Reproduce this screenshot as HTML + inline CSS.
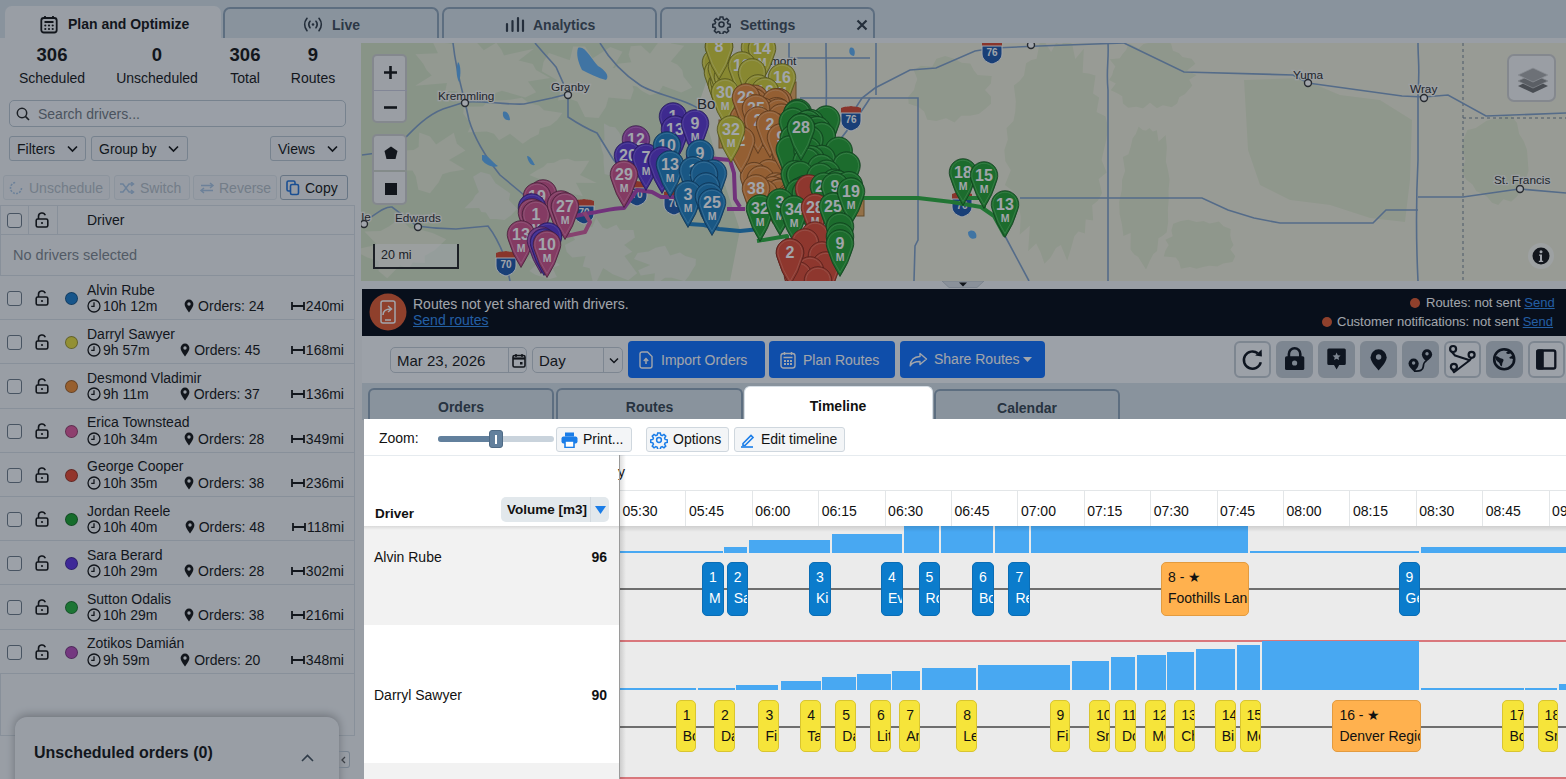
<!DOCTYPE html>
<html><head><meta charset="utf-8">
<style>
*{box-sizing:border-box;margin:0;padding:0}
html,body{width:1566px;height:779px;overflow:hidden;font-family:"Liberation Sans",sans-serif;color:#111;background:#e6ebef}
.abs{position:absolute}
svg{display:block}
#topbar{position:absolute;left:0;top:0;width:1566px;height:38px;background:#d8e2e8}
.ttab{position:absolute;top:7px;height:31px;border:2px solid #8ea3b8;border-bottom:none;border-radius:7px 7px 0 0;background:#d8e2e8;font-size:14px;font-weight:bold;color:#3d4a57}
.ttab.active{background:#f2f4f6;border-color:#f2f4f6;color:#111;top:6px;height:32px}
.ttab span{position:absolute;top:8px;white-space:nowrap}
.ttab svg{position:absolute}
#left{position:absolute;left:0;top:38px;width:1566px;height:741px;background:#f2f4f6}
.stat{position:absolute;top:45px;text-align:center;width:100px}
.stat b{display:block;font-size:18.5px;line-height:20px}
.stat span{display:block;font-size:14px;line-height:16px;margin-top:5px;color:#111}
.inp{position:absolute;border:1px solid #b9c5cf;border-radius:5px;background:#f4f6f8}
.btn{position:absolute;border:1px solid #b9c5cf;border-radius:3px;background:#eef1f4;font-size:14px;color:#111;white-space:nowrap}
.btn span{position:absolute;top:4px}
.btn.dis{color:#b3bcc5;border-color:#dde3e8;background:#eef1f4}
#tbl{position:absolute;left:0;top:205px;width:355px;height:531px;border:1px solid #d6dde3;border-top:1px solid #d6dde3}
.drow{position:absolute;left:0;width:354px;height:44.2px;border-top:1px solid #d6dde3;background:#f2f4f6}
.cb{position:absolute;left:7px;top:15px;width:15px;height:15px;border:1.5px solid #6b7985;border-radius:3px;background:#f7f8fa}
.lk{position:absolute;left:35px;top:14px;width:14px;height:16px}
.dot{position:absolute;left:65px;top:16px;width:13px;height:13px;border-radius:50%;border:1px solid rgba(0,0,0,.35)}
.dn{position:absolute;left:87px;top:5.5px;font-size:14px;line-height:16px;white-space:nowrap}
.dl{position:absolute;left:87px;top:22px;width:257px;font-size:14px;line-height:16px;display:flex;justify-content:space-between;white-space:nowrap}
.dl span{display:flex;align-items:center}
.ic{width:14px;height:14px;margin-right:2px}
.ic2{width:10px;height:14px;margin-right:4px}
.ic3{width:14px;height:10px;margin-right:1px}
#unsch{position:absolute;left:15px;top:717px;width:324px;height:80px;background:#f2f4f6;border-radius:12px 12px 0 0;box-shadow:0 -2px 10px rgba(0,0,0,.3)}
#overlay{position:absolute;left:0;top:0;width:1566px;height:779px;background:rgba(20,30,45,0.4);z-index:100}
.mc{background:#f4f4f4;border:2px solid rgba(0,0,0,.15);border-radius:5px}
.inp2{border:1px solid #c3ccd4;border-radius:5px;background:#f7f8fa;color:#111}
.pbtn{background:#0d6efd;border-radius:4px;color:#fff;font-size:14px;white-space:nowrap}
.ibtn{border:2px solid #c3cbd3;border-radius:6px;background:#f7f8fa}
.ibtn.act{background:#c4ccd4}
.stab{height:32px;border:2px solid #8ea3b8;border-bottom:none;border-radius:6px 6px 0 0;background:#d8e2e8;font-size:14px;font-weight:bold;color:#34414e;text-align:center;padding-top:9px}
#tlw{position:absolute;left:0;top:0;width:1566px;height:779px;z-index:200;overflow:hidden}
.tbtn{border:1px solid #cfd7de;border-radius:3px;background:#f3f5f7;font-size:14px;color:#111;white-space:nowrap}
.st{border-radius:5px;overflow:hidden;white-space:nowrap;font-size:14px}
.st .n{position:absolute;left:6px;top:6px}
.st .l{position:absolute;left:6px;top:27px}
.sb{background:#0b7ccc;color:#fff;border:1px solid #0a6db5}
.sy{background:#f6e43a;color:#111;border:1px solid #d9c530}
.so{background:#ffb14e;color:#111;border:1px solid #e39b3f}
.pn{fill:#fff;font-weight:bold;text-anchor:middle}
.pm{fill:#fff;font-weight:bold;text-anchor:middle}
</style></head><body>
<svg width="0" height="0" style="position:absolute">
 <defs>
  <g id="lock"><path d="M3.5 7V4.5a3.5 3.5 0 0 1 6.8-1.2" fill="none" stroke="#111" stroke-width="1.6"/><rect x="1.2" y="7" width="11.6" height="8" rx="1.6" fill="none" stroke="#111" stroke-width="1.6"/><circle cx="7" cy="11" r="1.1" fill="#111"/></g>
  <g id="clock"><circle cx="7" cy="7" r="6" fill="none" stroke="#111" stroke-width="1.3"/><path d="M7 3.3V7.4H4.2" fill="none" stroke="#111" stroke-width="1.3"/></g>
  <g id="pin"><path d="M5 13.5C2 9.5 .6 7.3.6 5a4.4 4.4 0 0 1 8.8 0c0 2.3-1.4 4.5-4.4 8.5z" fill="#111"/><circle cx="5" cy="5" r="1.7" fill="#f2f4f6"/></g>
  <g id="dist"><path d="M1 1v8M13 1v8M1 5h12" fill="none" stroke="#111" stroke-width="1.8"/></g>
 </defs>
</svg>
<div id="topbar">
  <div class="ttab active" style="left:5px;width:216px">
    <svg style="left:33px;top:7px" width="18" height="19" viewBox="0 0 18 19"><rect x="1.3" y="3" width="15.4" height="14.5" rx="2.5" fill="none" stroke="#111" stroke-width="1.8"/><path d="M5 1v3M13 1v3M4.5 7h9" stroke="#111" stroke-width="1.8"/><g fill="#111"><circle cx="5.3" cy="10.5" r="1.1"/><circle cx="9" cy="10.5" r="1.1"/><circle cx="12.7" cy="10.5" r="1.1"/><circle cx="5.3" cy="14" r="1.1"/><circle cx="9" cy="14" r="1.1"/><circle cx="12.7" cy="14" r="1.1"/></g></svg>
    <span style="left:61px">Plan and Optimize</span>
  </div>
  <div class="ttab" style="left:223px;width:216px">
    <svg style="left:78px;top:8px" width="20" height="15" viewBox="0 0 20 15"><g fill="none" stroke="#2f3a45" stroke-width="1.7" stroke-linecap="round"><path d="M4 1.3C1 5 1 10 4 13.7"/><path d="M16 1.3C19 5 19 10 16 13.7"/><path d="M7 4.3C5.6 6.2 5.6 8.8 7 10.7"/><path d="M13 4.3C14.4 6.2 14.4 8.8 13 10.7"/></g><circle cx="10" cy="7.5" r="1.3" fill="#2f3a45"/></svg>
    <span style="left:107px">Live</span>
  </div>
  <div class="ttab" style="left:442px;width:215px">
    <svg style="left:61px;top:7px" width="20" height="17" viewBox="0 0 20 17"><g stroke="#2f3a45" stroke-width="2.2" stroke-linecap="round"><path d="M2 8v7M7.5 5v10M13 2v13M18 4.5v10.5"/></g></svg>
    <span style="left:89px">Analytics</span>
  </div>
  <div class="ttab" style="left:660px;width:215px">
    <svg style="left:50px;top:6px" width="19" height="19" viewBox="0 0 24 24"><path fill="none" stroke="#2f3a45" stroke-width="2" d="M10.3 2.5h3.4l.6 2.8 1.9.8 2.4-1.6 2.4 2.4-1.6 2.4.8 1.9 2.8.6v3.4l-2.8.6-.8 1.9 1.6 2.4-2.4 2.4-2.4-1.6-1.9.8-.6 2.8h-3.4l-.6-2.8-1.9-.8-2.4 1.6-2.4-2.4 1.6-2.4-.8-1.9-2.8-.6v-3.4l2.8-.6.8-1.9-1.6-2.4 2.4-2.4 2.4 1.6 1.9-.8z"/><circle cx="12" cy="12" r="3.2" fill="none" stroke="#2f3a45" stroke-width="2"/></svg>
    <span style="left:78px">Settings</span>
    <svg style="left:194px;top:10px" width="12" height="12" viewBox="0 0 12 12"><path d="M1.5 1.5l9 9M10.5 1.5l-9 9" stroke="#2f3a45" stroke-width="2.2"/></svg>
  </div>
</div>
<div id="left">
</div>

<div class="stat" style="left:2px"><b>306</b><span>Scheduled</span></div>
<div class="stat" style="left:107px"><b>0</b><span>Unscheduled</span></div>
<div class="stat" style="left:195px"><b>306</b><span>Total</span></div>
<div class="stat" style="left:263px"><b>9</b><span>Routes</span></div>
<div class="inp" style="left:9px;top:100px;width:337px;height:27px">
  <svg style="position:absolute;left:6px;top:6px" width="14" height="14" viewBox="0 0 14 14"><circle cx="6" cy="6" r="4.7" fill="none" stroke="#222" stroke-width="1.5"/><path d="M9.4 9.4l3.6 3.6" stroke="#222" stroke-width="1.6"/></svg>
  <span style="position:absolute;left:28px;top:5px;font-size:14px;color:#6f7780">Search drivers...</span>
</div>
<div class="btn" style="left:9px;top:136px;width:77px;height:25px"><span style="left:7px">Filters</span><svg style="position:absolute;left:57px;top:8px" width="11" height="8" viewBox="0 0 11 8"><path d="M1 1.5l4.5 4.5 4.5-4.5" fill="none" stroke="#111" stroke-width="1.7"/></svg></div>
<div class="btn" style="left:91px;top:136px;width:97px;height:25px"><span style="left:7px">Group by</span><svg style="position:absolute;left:76px;top:8px" width="11" height="8" viewBox="0 0 11 8"><path d="M1 1.5l4.5 4.5 4.5-4.5" fill="none" stroke="#111" stroke-width="1.7"/></svg></div>
<div class="btn" style="left:270px;top:136px;width:76px;height:25px"><span style="left:7px">Views</span><svg style="position:absolute;left:56px;top:8px" width="11" height="8" viewBox="0 0 11 8"><path d="M1 1.5l4.5 4.5 4.5-4.5" fill="none" stroke="#111" stroke-width="1.7"/></svg></div>
<div class="btn dis" style="left:3px;top:175px;width:107px;height:25px"><svg style="position:absolute;left:5px;top:5px" width="14" height="14" viewBox="0 0 14 14"><path d="M12.5 7A5.5 5.5 0 1 1 7 1.5" fill="none" stroke="#a9c4e2" stroke-width="1.6" stroke-dasharray="2 1.2"/></svg><span style="left:25px">Unschedule</span></div>
<div class="btn dis" style="left:114px;top:175px;width:76px;height:25px"><svg style="position:absolute;left:4px;top:6px" width="16" height="12" viewBox="0 0 16 12"><path d="M1 2h3l6 8h4M1 10h3l6-8h4M12 0l2.5 2L12 4M12 8l2.5 2L12 12" fill="none" stroke="#a9c4e2" stroke-width="1.5"/></svg><span style="left:25px">Switch</span></div>
<div class="btn dis" style="left:193px;top:175px;width:84px;height:25px"><svg style="position:absolute;left:5px;top:6px" width="16" height="12" viewBox="0 0 16 12"><path d="M2 3.5h12M11 1l3 2.5-3 2.5M14 8.5H2M5 6L2 8.5 5 11" fill="none" stroke="#a9c4e2" stroke-width="1.5"/></svg><span style="left:25px">Reverse</span></div>
<div class="btn" style="left:280px;top:175px;width:68px;height:25px;border-color:#9fb0bf"><svg style="position:absolute;left:5px;top:4px" width="14" height="16" viewBox="0 0 14 16"><rect x="1" y="1" width="8" height="10" rx="1.5" fill="none" stroke="#1f6fd6" stroke-width="1.6"/><rect x="4.5" y="4.5" width="8" height="10" rx="1.5" fill="#eef1f4" stroke="#1f6fd6" stroke-width="1.6"/></svg><span style="left:24px">Copy</span></div>
<div id="tbl"></div>
<div class="abs" style="left:0;top:205px;width:355px;height:30px;border-bottom:1px solid #d6dde3">
  <span class="cb" style="top:8px"></span>
  <div class="abs" style="left:28px;top:0;width:1px;height:30px;background:#d6dde3"></div>
  <svg class="lk" style="top:7px" viewBox="0 0 14 16"><use href="#lock"/></svg>
  <div class="abs" style="left:57px;top:0;width:1px;height:30px;background:#d6dde3"></div>
  <span class="abs" style="left:87px;top:7px;font-size:14px">Driver</span>
</div>
<div class="abs" style="left:13px;top:247px;font-size:14.5px;color:#7c848c">No drivers selected</div>

<div class="drow" style="top:275.00px"><span class="cb"></span><svg class="lk" viewBox="0 0 14 16"><use href="#lock"/></svg><span class="dot" style="background:#1a7bc9"></span><div class="dn">Alvin Rube</div><div class="dl"><span><svg class="ic" viewBox="0 0 14 14"><use href="#clock"/></svg>10h 12m</span><span><svg class="ic2" viewBox="0 0 10 14"><use href="#pin"/></svg>Orders: 24</span><span><svg class="ic3" viewBox="0 0 14 10"><use href="#dist"/></svg>240mi</span></div></div>
<div class="drow" style="top:319.20px"><span class="cb"></span><svg class="lk" viewBox="0 0 14 16"><use href="#lock"/></svg><span class="dot" style="background:#e8dc3a"></span><div class="dn">Darryl Sawyer</div><div class="dl"><span><svg class="ic" viewBox="0 0 14 14"><use href="#clock"/></svg>9h 57m</span><span><svg class="ic2" viewBox="0 0 10 14"><use href="#pin"/></svg>Orders: 45</span><span><svg class="ic3" viewBox="0 0 14 10"><use href="#dist"/></svg>168mi</span></div></div>
<div class="drow" style="top:363.40px"><span class="cb"></span><svg class="lk" viewBox="0 0 14 16"><use href="#lock"/></svg><span class="dot" style="background:#ef8a2f"></span><div class="dn">Desmond Vladimir</div><div class="dl"><span><svg class="ic" viewBox="0 0 14 14"><use href="#clock"/></svg>9h 11m</span><span><svg class="ic2" viewBox="0 0 10 14"><use href="#pin"/></svg>Orders: 37</span><span><svg class="ic3" viewBox="0 0 14 10"><use href="#dist"/></svg>136mi</span></div></div>
<div class="drow" style="top:407.60px"><span class="cb"></span><svg class="lk" viewBox="0 0 14 16"><use href="#lock"/></svg><span class="dot" style="background:#e0559a"></span><div class="dn">Erica Townstead</div><div class="dl"><span><svg class="ic" viewBox="0 0 14 14"><use href="#clock"/></svg>10h 34m</span><span><svg class="ic2" viewBox="0 0 10 14"><use href="#pin"/></svg>Orders: 28</span><span><svg class="ic3" viewBox="0 0 14 10"><use href="#dist"/></svg>349mi</span></div></div>
<div class="drow" style="top:451.80px"><span class="cb"></span><svg class="lk" viewBox="0 0 14 16"><use href="#lock"/></svg><span class="dot" style="background:#e8452c"></span><div class="dn">George Cooper</div><div class="dl"><span><svg class="ic" viewBox="0 0 14 14"><use href="#clock"/></svg>10h 35m</span><span><svg class="ic2" viewBox="0 0 10 14"><use href="#pin"/></svg>Orders: 38</span><span><svg class="ic3" viewBox="0 0 14 10"><use href="#dist"/></svg>236mi</span></div></div>
<div class="drow" style="top:496.00px"><span class="cb"></span><svg class="lk" viewBox="0 0 14 16"><use href="#lock"/></svg><span class="dot" style="background:#17a02a"></span><div class="dn">Jordan Reele</div><div class="dl"><span><svg class="ic" viewBox="0 0 14 14"><use href="#clock"/></svg>10h 40m</span><span><svg class="ic2" viewBox="0 0 10 14"><use href="#pin"/></svg>Orders: 48</span><span><svg class="ic3" viewBox="0 0 14 10"><use href="#dist"/></svg>118mi</span></div></div>
<div class="drow" style="top:540.20px"><span class="cb"></span><svg class="lk" viewBox="0 0 14 16"><use href="#lock"/></svg><span class="dot" style="background:#5b2fe0"></span><div class="dn">Sara Berard</div><div class="dl"><span><svg class="ic" viewBox="0 0 14 14"><use href="#clock"/></svg>10h 29m</span><span><svg class="ic2" viewBox="0 0 10 14"><use href="#pin"/></svg>Orders: 28</span><span><svg class="ic3" viewBox="0 0 14 10"><use href="#dist"/></svg>302mi</span></div></div>
<div class="drow" style="top:584.40px"><span class="cb"></span><svg class="lk" viewBox="0 0 14 16"><use href="#lock"/></svg><span class="dot" style="background:#22b03a"></span><div class="dn">Sutton Odalis</div><div class="dl"><span><svg class="ic" viewBox="0 0 14 14"><use href="#clock"/></svg>10h 29m</span><span><svg class="ic2" viewBox="0 0 10 14"><use href="#pin"/></svg>Orders: 38</span><span><svg class="ic3" viewBox="0 0 14 10"><use href="#dist"/></svg>216mi</span></div></div>
<div class="drow" style="top:628.60px"><span class="cb"></span><svg class="lk" viewBox="0 0 14 16"><use href="#lock"/></svg><span class="dot" style="background:#b548b8"></span><div class="dn">Zotikos Damián</div><div class="dl"><span><svg class="ic" viewBox="0 0 14 14"><use href="#clock"/></svg>9h 59m</span><span><svg class="ic2" viewBox="0 0 10 14"><use href="#pin"/></svg>Orders: 20</span><span><svg class="ic3" viewBox="0 0 14 10"><use href="#dist"/></svg>348mi</span></div></div>
<div id="unsch">
  <span class="abs" style="left:19px;top:27px;font-size:16px;font-weight:bold;white-space:nowrap">Unscheduled orders (0)</span>
  <svg class="abs" style="left:286px;top:37px" width="13" height="8" viewBox="0 0 13 8"><path d="M1 7l5.5-5.5L12 7" fill="none" stroke="#44505c" stroke-width="1.6"/></svg>
</div>
<div class="abs" style="left:339px;top:751px;width:11px;height:17px;border:1px solid #b9c5cf;border-left:none;border-radius:0 3px 3px 0"><svg class="abs" style="left:1px;top:4px" width="6" height="8" viewBox="0 0 6 8"><path d="M5 1L2 4l3 3" fill="none" stroke="#555" stroke-width="1.3"/></svg></div>
<div class="abs" style="left:0;top:673px;width:354px;height:1px;background:#d6dde3"></div>


<div class="abs" style="left:361px;top:281px;width:1205px;height:8px;background:#f2f4f6">
  <svg class="abs" style="left:581px;top:0" width="42" height="7" viewBox="0 0 42 7"><path d="M0 0H42L35 6.5H7Z" fill="#d9dee3" stroke="#b8c0c8" stroke-width=".8"/><path d="M17 1.5h8l-4 4z" fill="#111"/></svg>
</div>
<div class="abs" style="left:362px;top:289px;width:1204px;height:47px;background:#000510">
  <svg class="abs" style="left:7px;top:4px" width="38" height="38" viewBox="0 0 38 38"><circle cx="19" cy="19" r="18.5" fill="#e2582c"/><rect x="12" y="8" width="14" height="22" rx="2" fill="none" stroke="#fff" stroke-width="1.5"/><path d="M16 27h6" stroke="#fff" stroke-width="1.5"/><path d="M14 22c0-4 3-6 8-6M19 13l3.5 3-3.5 3" fill="none" stroke="#fff" stroke-width="1.5"/></svg>
  <span class="abs" style="left:51px;top:7px;font-size:14px;color:#fff;white-space:nowrap">Routes not yet shared with drivers.</span>
  <span class="abs" style="left:51px;top:23px;font-size:14px;color:#2f8bf0;text-decoration:underline;white-space:nowrap">Send routes</span>
  <span class="abs" style="left:1048px;top:9px;width:10px;height:10px;border-radius:50%;background:#e2582c"></span>
  <span class="abs" style="left:1064px;top:6px;font-size:13px;color:#fff;white-space:nowrap">Routes: not sent <u style="color:#2f8bf0">Send</u></span>
  <span class="abs" style="left:960px;top:28px;width:10px;height:10px;border-radius:50%;background:#e2582c"></span>
  <span class="abs" style="left:975px;top:25px;font-size:13px;color:#fff;white-space:nowrap">Customer notifications: not sent <u style="color:#2f8bf0">Send</u></span>
</div>
<div class="abs" style="left:362px;top:336px;width:1204px;height:47px;background:#f7f8fa"></div>
<div class="abs inp2" style="left:390px;top:347px;width:137px;height:26px">
  <span class="abs" style="left:6px;top:4px;font-size:15px">Mar 23, 2026</span>
  <div class="abs" style="left:117px;top:0;width:1px;height:24px;background:#c3ccd4"></div>
  <svg class="abs" style="left:121px;top:5px" width="14" height="15" viewBox="0 0 14 15"><rect x="1" y="2.5" width="12" height="11.5" rx="1.5" fill="none" stroke="#111" stroke-width="1.6"/><path d="M1 5.5h12" stroke="#111" stroke-width="2.2"/><path d="M4 1v3M10 1v3" stroke="#111" stroke-width="1.5"/><rect x="8" y="9" width="2.5" height="2.5" fill="#111"/></svg>
</div>
<div class="abs inp2" style="left:532px;top:347px;width:91px;height:26px">
  <span class="abs" style="left:6px;top:4px;font-size:15px">Day</span>
  <div class="abs" style="left:70px;top:0;width:1px;height:24px;background:#c3ccd4"></div>
  <svg class="abs" style="left:76px;top:9px" width="10" height="7" viewBox="0 0 10 7"><path d="M1 1.5l4 4 4-4" fill="none" stroke="#111" stroke-width="1.5"/></svg>
</div>
<div class="abs pbtn" style="left:628px;top:341px;width:137px;height:37px">
  <svg class="abs" style="left:11px;top:10px" width="14" height="18" viewBox="0 0 14 18"><path d="M1 3a2 2 0 0 1 2-2h5.5L13 5.5V15a2 2 0 0 1-2 2H3a2 2 0 0 1-2-2z" fill="none" stroke="#fff" stroke-width="1.4"/><path d="M7 13V8M4.8 10L7 7.6 9.2 10" fill="none" stroke="#fff" stroke-width="1.5"/></svg>
  <span class="abs" style="left:33px;top:11px">Import Orders</span>
</div>
<div class="abs pbtn" style="left:769px;top:341px;width:126px;height:37px">
  <svg class="abs" style="left:11px;top:10px" width="16" height="18" viewBox="0 0 16 18"><rect x="1" y="2.5" width="14" height="14.5" rx="2.5" fill="none" stroke="#fff" stroke-width="1.4"/><path d="M4.5 1v3M11.5 1v3M3.5 6.5h9" stroke="#fff" stroke-width="1.4"/><g fill="#fff"><rect x="4" y="9" width="2" height="2"/><rect x="7" y="9" width="2" height="2"/><rect x="10" y="9" width="2" height="2"/><rect x="4" y="12" width="2" height="2"/><rect x="7" y="12" width="2" height="2"/><rect x="10" y="12" width="2" height="2"/></g></svg>
  <span class="abs" style="left:34px;top:11px">Plan Routes</span>
</div>
<div class="abs pbtn" style="left:900px;top:341px;width:145px;height:37px">
  <svg class="abs" style="left:9px;top:11px" width="19" height="15" viewBox="0 0 19 15"><path d="M11 1.5l6.5 5.5-6.5 5.5V9.5C6 9.5 3 10.5 1.2 13.8 1.5 8.5 4.5 4.8 11 4.5z" fill="none" stroke="#fff" stroke-width="1.4" stroke-linejoin="round"/></svg>
  <span class="abs" style="left:34px;top:10px">Share Routes</span>
  <svg class="abs" style="left:123px;top:16px" width="9" height="5" viewBox="0 0 9 5"><path d="M0 0h9L4.5 5z" fill="#fff"/></svg>
</div>

<div id="mapbox" class="abs" style="left:361px;top:43px;width:1205px;height:238px;overflow:hidden">
<svg class="abs" style="left:0;top:0" width="1205" height="238" viewBox="361 43 1205 238">
<rect x="361" y="43" width="1205" height="238" fill="#f1efdb"/>
<path d="M361 43 L720 43 L700 100 L720 170 L740 230 L730 281 L361 281Z" fill="#d6e3c4"/>
<path d="M1103.9 150.0 L1101.6 160.1 L1106.7 172.6 L1098.7 179.1 L1102.1 193.1 L1097.9 200.8 L1092.2 205.2 L1093.2 220.4 L1085.7 219.4 L1084.9 233.6 L1078.4 231.5 L1074.3 236.5 L1071.2 248.1 L1067.2 260.8 L1060.8 245.0 L1056.0 248.0 L1050.6 257.6 L1044.5 263.7 L1040.3 251.7 L1036.2 243.5 L1028.1 251.3 L1029.8 225.7 L1019.7 234.7 L1020.7 216.7 L1019.0 206.4 L1016.7 197.7 L1012.4 190.7 L1004.8 184.9 L1010.8 170.2 L1005.3 161.2 L1004.3 150.0 L1007.8 139.4 L1006.5 127.9 L1013.4 121.0 L1015.2 111.8 L1015.8 101.2 L1013.8 85.6 L1019.5 81.0 L1024.0 75.5 L1026.0 63.3 L1031.3 60.1 L1036.6 58.7 L1039.5 43.1 L1045.1 42.4 L1051.1 52.0 L1056.0 43.1 L1061.3 44.9 L1067.3 38.0 L1072.3 44.6 L1075.3 59.0 L1083.9 48.6 L1082.7 72.8 L1088.8 73.5 L1095.5 75.4 L1093.1 93.4 L1099.2 97.6 L1096.6 112.0 L1105.5 116.2 L1108.0 126.8 L1106.6 138.8Z" fill="#e2e8cc"/>
<path d="M1196.7 75.0 L1189.2 79.7 L1192.3 85.5 L1188.5 89.9 L1184.8 94.3 L1179.3 97.3 L1177.2 103.5 L1171.6 107.3 L1162.9 105.2 L1156.9 108.2 L1150.0 102.8 L1143.0 108.5 L1136.4 106.8 L1128.1 107.7 L1122.9 103.4 L1122.2 96.2 L1117.2 93.2 L1110.7 90.3 L1115.8 83.5 L1109.0 79.9 L1112.2 75.0 L1113.3 70.6 L1115.3 66.4 L1109.6 59.3 L1119.8 58.3 L1122.6 54.1 L1126.1 50.0 L1128.8 43.3 L1138.7 48.4 L1143.5 43.9 L1150.0 42.5 L1157.3 39.8 L1164.2 41.7 L1171.1 43.4 L1173.0 50.8 L1178.9 52.9 L1182.5 57.0 L1191.7 58.8 L1195.4 63.8 L1187.1 70.5Z" fill="#e2e8cc"/>
<path d="M1168.6 190.0 L1168.7 200.1 L1167.9 209.9 L1168.2 221.6 L1166.8 232.2 L1162.4 236.0 L1158.5 238.2 L1157.1 250.9 L1153.4 254.0 L1150.0 260.5 L1146.0 269.5 L1141.9 263.1 L1138.2 256.9 L1134.2 254.6 L1130.5 249.6 L1130.7 232.9 L1123.4 236.1 L1121.9 224.4 L1119.6 214.1 L1119.1 201.9 L1121.8 190.0 L1122.1 179.4 L1125.1 170.9 L1122.8 156.9 L1128.4 154.3 L1130.6 146.9 L1132.6 138.3 L1135.8 133.9 L1138.6 126.6 L1142.6 130.1 L1146.0 130.5 L1149.5 128.1 L1152.8 131.4 L1156.9 130.2 L1158.6 141.4 L1165.7 134.9 L1166.9 147.4 L1165.9 161.6 L1168.0 170.0 L1169.6 179.6Z" fill="#e2e8cc"/>
<path d="M1244 80 L1300 78 L1340 95 L1380 100 L1412 120 L1410 180 L1405 222 L1370 218 L1330 205 L1290 200 L1260 185 L1248 150Z" fill="#e2e8cc"/>
<path d="M1233.6 245.0 L1230.4 249.6 L1235.3 256.2 L1232.5 261.9 L1223.2 263.4 L1217.4 266.5 L1209.5 265.8 L1203.2 266.9 L1196.5 268.7 L1189.9 267.1 L1180.8 268.8 L1179.0 261.7 L1175.7 257.6 L1163.7 256.5 L1165.5 250.2 L1168.7 245.0 L1165.3 239.7 L1172.6 236.3 L1171.4 230.2 L1173.2 223.8 L1180.6 221.0 L1188.5 219.8 L1196.6 221.9 L1203.5 221.1 L1209.7 223.6 L1218.9 221.6 L1223.6 226.2 L1230.7 229.1 L1230.3 235.4 L1231.4 240.2Z" fill="#e2e8cc"/>
<path d="M1527.8 160.0 L1528.6 170.7 L1525.3 180.2 L1521.5 188.9 L1517.0 196.6 L1511.1 201.8 L1503.5 199.3 L1498.2 205.0 L1492.0 202.8 L1487.0 196.7 L1482.1 193.5 L1476.3 191.2 L1472.5 184.5 L1466.0 179.4 L1461.6 170.6 L1465.5 160.0 L1461.8 149.4 L1463.6 139.0 L1467.4 129.9 L1475.7 127.9 L1481.3 124.3 L1486.5 120.7 L1492.1 119.3 L1497.9 119.2 L1504.6 115.6 L1511.8 116.3 L1517.1 123.1 L1519.1 133.7 L1523.7 140.9 L1527.0 149.8Z" fill="#e2e8cc"/>
<path d="M985.0 90.0 L991.0 96.5 L991.0 103.7 L985.1 109.1 L978.8 114.0 L969.9 115.8 L961.2 115.8 L954.5 122.4 L946.0 118.3 L936.5 121.1 L927.2 119.7 L924.1 111.6 L918.6 107.1 L908.6 103.8 L908.2 96.7 L914.0 90.0 L915.3 84.5 L917.3 79.1 L913.7 70.2 L920.8 65.7 L932.1 66.8 L936.4 58.7 L945.2 55.9 L954.4 58.8 L961.8 62.7 L970.3 63.6 L973.8 70.2 L977.6 74.9 L991.7 76.1 L990.9 83.5Z" fill="#e2e8cc"/>
<path d="M536.0 70.0 L550.1 78.1 L527.9 81.6 L536.1 92.2 L525.2 97.4 L501.9 90.7 L494.0 93.6 L484.9 95.5 L475.3 94.4 L462.0 100.3 L457.1 91.6 L445.3 91.0 L447.0 83.1 L415.3 85.7 L431.7 75.6 L426.6 70.0 L423.1 63.4 L415.5 54.3 L438.0 53.3 L432.4 41.2 L452.5 44.0 L462.6 40.8 L474.2 39.7 L483.8 50.2 L496.3 42.7 L501.4 49.8 L504.0 55.4 L533.8 48.7 L518.7 60.6 L532.8 63.9Z" fill="#e8ebd4"/>
<path d="M557.2 120.0 L550.4 125.4 L539.8 128.6 L538.7 134.3 L530.9 138.1 L522.7 143.7 L510.0 133.7 L499.1 140.3 L494.0 133.8 L486.8 131.6 L467.8 132.2 L471.1 125.2 L468.0 120.0 L463.3 113.7 L463.9 106.7 L483.0 106.5 L488.2 101.1 L499.6 100.6 L510.0 99.8 L521.9 97.7 L529.2 103.3 L539.0 105.5 L544.0 110.2 L562.3 113.0Z" fill="#e8ebd4"/>
<path d="M630.6 80.0 L633.8 89.8 L630.4 99.6 L608.5 97.6 L605.8 107.1 L598.6 118.0 L585.0 117.1 L577.3 101.6 L570.3 99.1 L557.9 100.4 L560.7 90.5 L553.4 86.4 L557.0 80.0 L541.8 71.3 L543.5 62.0 L548.9 52.9 L569.8 60.3 L573.1 46.6 L585.0 46.6 L592.8 58.3 L610.4 47.1 L622.5 51.8 L612.8 67.9 L635.9 69.8Z" fill="#e8ebd4"/>
<path d="M682.2 70.0 L683.5 76.4 L692.2 87.4 L681.3 92.4 L662.8 85.8 L658.6 92.8 L650.0 95.3 L642.1 91.0 L636.8 86.4 L628.8 85.1 L614.3 84.7 L629.2 74.0 L613.5 70.0 L617.8 63.8 L631.4 62.3 L628.6 54.7 L630.8 46.2 L640.9 45.6 L650.0 53.7 L662.6 36.5 L671.5 43.4 L684.1 45.7 L670.7 61.5 L677.5 64.7Z" fill="#e8ebd4"/>
<path d="M449.0 160.0 L464.9 169.4 L449.8 172.0 L442.4 174.2 L438.7 182.3 L430.0 193.2 L418.4 189.8 L415.8 176.3 L412.5 170.6 L391.9 170.3 L398.3 160.0 L396.9 151.0 L413.7 150.1 L418.6 146.9 L419.3 132.6 L430.0 136.5 L436.1 144.4 L453.8 132.7 L456.9 143.7 L465.4 150.4Z" fill="#e8ebd4"/>
<path d="M580.0 175.0 L596.7 182.9 L575.9 182.7 L582.8 195.9 L568.9 193.3 L560.0 192.4 L550.3 194.8 L536.3 196.7 L540.2 184.6 L539.9 179.3 L529.4 175.0 L537.4 170.1 L543.3 166.9 L547.1 163.2 L554.1 162.8 L560.0 159.8 L567.9 158.8 L574.9 161.3 L589.3 160.8 L583.7 169.9Z" fill="#e8ebd4"/>
<path d="M435.0 250.0 L424.7 255.7 L424.8 262.9 L412.6 262.4 L408.7 269.0 L400.0 265.3 L387.2 278.2 L378.6 271.1 L378.7 261.0 L367.4 257.6 L352.8 250.0 L377.2 244.7 L364.5 231.6 L380.5 230.9 L389.2 226.3 L400.0 218.3 L409.9 228.3 L420.7 229.7 L432.6 233.1 L446.1 239.3Z" fill="#e8ebd4"/>
<path d="M508.9 200.0 L517.2 208.8 L511.1 215.3 L504.5 220.0 L496.2 219.1 L490.0 219.0 L485.9 212.5 L481.4 211.9 L479.1 207.9 L464.5 208.3 L472.8 200.0 L475.4 195.3 L478.9 191.9 L473.1 176.7 L480.9 172.1 L490.0 174.6 L495.5 183.2 L499.9 186.3 L504.5 189.5 L510.2 193.4Z" fill="#e6e9d8"/>
<path d="M624.2 245.0 L632.3 251.8 L624.4 256.0 L637.1 273.2 L628.3 280.2 L612.9 274.2 L603.2 267.9 L594.0 287.3 L589.7 268.2 L582.7 266.5 L585.6 256.0 L572.3 257.5 L566.8 252.0 L564.9 245.0 L575.2 239.8 L568.9 231.0 L585.5 234.0 L584.3 225.6 L592.2 227.3 L596.2 217.9 L602.5 227.5 L607.1 229.0 L616.4 224.7 L619.9 229.9 L633.4 230.0 L634.9 237.6Z" fill="#e6e9d8"/>
<path d="M695.6 265.0 L692.1 270.3 L689.2 275.5 L684.7 281.3 L672.0 277.8 L665.0 277.7 L653.9 285.5 L654.9 273.3 L640.7 275.6 L638.2 270.2 L650.3 265.0 L634.0 259.0 L637.6 253.1 L648.6 251.5 L655.6 247.7 L665.0 245.8 L670.2 255.4 L680.0 252.6 L685.3 256.1 L695.9 259.0Z" fill="#e6e9d8"/>
<path d="M625.3 150.0 L624.3 160.9 L619.1 166.7 L616.2 177.5 L610.0 175.6 L604.6 173.9 L603.6 161.8 L603.6 154.9 L602.0 150.0 L600.3 142.6 L604.5 140.0 L604.0 123.5 L610.0 126.8 L615.1 127.3 L619.4 132.7 L622.9 140.2Z" fill="#e6e9d8"/>
<path d="M559.9 265.0 L552.5 267.9 L556.9 276.9 L549.1 279.3 L541.7 276.7 L535.4 274.7 L529.5 271.0 L535.9 265.0 L528.6 258.7 L537.7 257.7 L542.9 257.8 L547.6 255.8 L556.3 253.7 L554.9 261.2Z" fill="#e6e9d8"/>
<path d="M1463 43 V281 M1463 118 H1566" stroke="#6f7f8f" stroke-width="1" stroke-dasharray="3 3" fill="none"/>
<path d="M453 43 C456 70 462 90 465 102 L469 120 C475 140 488 160 500 175 L524 195 L535 205" fill="none" stroke="#7f9fc6" stroke-width="1.6"/>
<path d="M362 155 L392 151 C405 140 420 118 443 109 L465 102 C480 100 505 105 524 104 L552 98 L568 94" fill="none" stroke="#7f9fc6" stroke-width="1.6"/>
<path d="M535 43 C545 55 552 62 556 67 L568 94 L568 117 C580 125 590 130 597 133 L613 159 L625 175" fill="none" stroke="#7f9fc6" stroke-width="1.6"/>
<path d="M362 223 C375 215 385 206 392 207 L417 226 C430 228 445 229 456 229 L488 226 C495 235 500 245 505 258 L510 281" fill="none" stroke="#7f9fc6" stroke-width="1.6"/>
<path d="M600 43 C610 60 625 75 640 85 C655 95 690 100 700 110" fill="none" stroke="#7f9fc6" stroke-width="1.6"/>
<path d="M846 123 L862 98 L875 88 L910 70 L936 68 L975 51 L994 48 L1039 46 L1124 43" fill="none" stroke="#7f9fc6" stroke-width="1.6"/>
<path d="M876 43 L876 95" fill="none" stroke="#7f9fc6" stroke-width="1.6"/>
<path d="M800 98 L918 98 L918 240 L915 246 L914 281" fill="none" stroke="#7f9fc6" stroke-width="1.6"/>
<path d="M1005 236 L1029 281" fill="none" stroke="#7f9fc6" stroke-width="1.6"/>
<path d="M1020 198 L1202 198 L1228 210 L1254 218 L1280 223 L1373 223 L1386 210 L1418 210" fill="none" stroke="#7f9fc6" stroke-width="1.6"/>
<path d="M1108 43 C1109 60 1106 70 1108 90 L1108 281" fill="none" stroke="#7f9fc6" stroke-width="1.6"/>
<path d="M1124 43 L1184 72 L1293 75 L1308 83 L1402 96 L1424 97 L1448 95 L1486 116 L1566 113" fill="none" stroke="#7f9fc6" stroke-width="1.6"/>
<path d="M1418 43 C1418 60 1420 70 1418 90 L1418 160 C1416 200 1416 240 1418 281" fill="none" stroke="#7f9fc6" stroke-width="1.6"/>
<path d="M1418 197 L1463 197 L1512 190 L1520 189 L1566 193" fill="none" stroke="#7f9fc6" stroke-width="1.6"/>
<path d="M789 43 L789 58 M789 58 L870 58 M826 43 C826 80 828 110 824 139 M870 98 C860 115 840 140 824 160" fill="none" stroke="#7f9fc6" stroke-width="1.6"/>
<path d="M578 48 C585 45 592 60 598 66 C605 70 610 76 606 80 C598 78 590 74 582 70 C578 62 576 54 578 48Z" fill="#5eaef2"/>
<path d="M503 112 C507 110 510 116 510 120 C506 121 502 118 503 112Z" fill="#5eaef2"/>
<path d="M482 155 C488 154 492 162 498 166 C495 168 486 166 482 160Z" fill="#5eaef2"/>
<path d="M527 156 C531 156 533 162 535 165 C531 166 528 162 527 156Z" fill="#5eaef2"/>
<path d="M458 62 C461 64 461 76 459 82 C456 76 456 68 458 62Z" fill="#5eaef2"/>
<path d="M968 232 C972 228 978 232 976 238 C972 240 968 238 968 232Z" fill="#5eaef2"/>
<path d="M850 48 C854 46 856 52 854 56 C850 56 848 52 850 48Z" fill="#5eaef2"/>
<text x="438" y="100" font-size="11.8" fill="#2a2a2a" stroke="#f6f6f0" stroke-width="2.5" paint-order="stroke">Kremmling</text>
<text x="551" y="91" font-size="11.8" fill="#2a2a2a" stroke="#f6f6f0" stroke-width="2.5" paint-order="stroke">Granby</text>
<text x="395" y="222" font-size="11.8" fill="#2a2a2a" stroke="#f6f6f0" stroke-width="2.5" paint-order="stroke">Edwards</text>
<text x="355" y="221" font-size="11.8" fill="#2a2a2a" stroke="#f6f6f0" stroke-width="2.5" paint-order="stroke">gle</text>
<text x="1293" y="79" font-size="11.8" fill="#2a2a2a" stroke="#f6f6f0" stroke-width="2.5" paint-order="stroke">Yuma</text>
<text x="1410" y="93" font-size="11.8" fill="#2a2a2a" stroke="#f6f6f0" stroke-width="2.5" paint-order="stroke">Wray</text>
<text x="1494" y="184" font-size="11.8" fill="#2a2a2a" stroke="#f6f6f0" stroke-width="2.5" paint-order="stroke">St. Francis</text>
<text x="770" y="65" font-size="11.8" fill="#2a2a2a" stroke="#f6f6f0" stroke-width="2.5" paint-order="stroke">mont</text>
<circle cx="465" cy="103" r="3.5" fill="#fff" stroke="#333" stroke-width="1.4"/>
<circle cx="568" cy="95" r="3.5" fill="#fff" stroke="#333" stroke-width="1.4"/>
<circle cx="418" cy="227" r="3.5" fill="#fff" stroke="#333" stroke-width="1.4"/>
<circle cx="364" cy="224" r="3.5" fill="#fff" stroke="#333" stroke-width="1.4"/>
<circle cx="1308" cy="83" r="3.5" fill="#fff" stroke="#333" stroke-width="1.4"/>
<circle cx="1424" cy="98" r="3.5" fill="#fff" stroke="#333" stroke-width="1.4"/>
<circle cx="1520" cy="189" r="3.5" fill="#fff" stroke="#333" stroke-width="1.4"/>
<circle cx="1031" cy="45" r="3.5" fill="#fff" stroke="#333" stroke-width="1.4"/>
<g transform="translate(506 262)"><path d="M-10 -9 C-6 -11 -3 -10 0 -11 C3 -10 6 -11 10 -9 L10 -4 L-10 -4Z" fill="#d8452b"/><path d="M-10 -4 L10 -4 L10 4 C10 10 4 13 0 14 C-4 13 -10 10 -10 4Z" fill="#1d56a8" stroke="#fff" stroke-width="1"/><text x="0" y="6" font-size="10" fill="#fff" font-weight="bold" text-anchor="middle">70</text></g>
<g transform="translate(851 117)"><path d="M-10 -9 C-6 -11 -3 -10 0 -11 C3 -10 6 -11 10 -9 L10 -4 L-10 -4Z" fill="#d8452b"/><path d="M-10 -4 L10 -4 L10 4 C10 10 4 13 0 14 C-4 13 -10 10 -10 4Z" fill="#1d56a8" stroke="#fff" stroke-width="1"/><text x="0" y="6" font-size="10" fill="#fff" font-weight="bold" text-anchor="middle">76</text></g>
<g transform="translate(992 50)"><path d="M-10 -9 C-6 -11 -3 -10 0 -11 C3 -10 6 -11 10 -9 L10 -4 L-10 -4Z" fill="#d8452b"/><path d="M-10 -4 L10 -4 L10 4 C10 10 4 13 0 14 C-4 13 -10 10 -10 4Z" fill="#1d56a8" stroke="#fff" stroke-width="1"/><text x="0" y="6" font-size="10" fill="#fff" font-weight="bold" text-anchor="middle">76</text></g>
<g transform="translate(962 203)"><path d="M-10 -9 C-6 -11 -3 -10 0 -11 C3 -10 6 -11 10 -9 L10 -4 L-10 -4Z" fill="#d8452b"/><path d="M-10 -4 L10 -4 L10 4 C10 10 4 13 0 14 C-4 13 -10 10 -10 4Z" fill="#1d56a8" stroke="#fff" stroke-width="1"/><text x="0" y="6" font-size="10" fill="#fff" font-weight="bold" text-anchor="middle">76</text></g>
<g transform="translate(584 210)"><path d="M-10 -9 C-6 -11 -3 -10 0 -11 C3 -10 6 -11 10 -9 L10 -4 L-10 -4Z" fill="#d8452b"/><path d="M-10 -4 L10 -4 L10 4 C10 10 4 13 0 14 C-4 13 -10 10 -10 4Z" fill="#1d56a8" stroke="#fff" stroke-width="1"/><text x="0" y="6" font-size="10" fill="#fff" font-weight="bold" text-anchor="middle">70</text></g>
<g transform="translate(637 192)"><path d="M-10 -9 C-6 -11 -3 -10 0 -11 C3 -10 6 -11 10 -9 L10 -4 L-10 -4Z" fill="#d8452b"/><path d="M-10 -4 L10 -4 L10 4 C10 10 4 13 0 14 C-4 13 -10 10 -10 4Z" fill="#1d56a8" stroke="#fff" stroke-width="1"/><text x="0" y="6" font-size="10" fill="#fff" font-weight="bold" text-anchor="middle">70</text></g>
<g transform="translate(674 201)"><path d="M-10 -9 C-6 -11 -3 -10 0 -11 C3 -10 6 -11 10 -9 L10 -4 L-10 -4Z" fill="#d8452b"/><path d="M-10 -4 L10 -4 L10 4 C10 10 4 13 0 14 C-4 13 -10 10 -10 4Z" fill="#1d56a8" stroke="#fff" stroke-width="1"/><text x="0" y="6" font-size="10" fill="#fff" font-weight="bold" text-anchor="middle">70</text></g>
<rect x="782" y="82" width="14" height="22" fill="#e9a95a" stroke="#9a6a2a"/>
<rect x="850" y="198" width="14" height="18" fill="#e9a95a" stroke="#9a6a2a"/>
<rect x="719" y="120" width="10" height="28" fill="#e9a95a" stroke="#9a6a2a"/>
<path d="M575 216 L590 213 C600 212 612 208 624 208 L637 190 L652 192 L661 197 L675 197 L686 197 M686 156 L730 160 L734 173 L735 199 L740 207 M727 209 L745 209" fill="none" stroke="#b040b0" stroke-width="4" stroke-linejoin="round"/>
<path d="M566 236 L585 232 L590 222 L584 212" fill="none" stroke="#d25a9c" stroke-width="4" stroke-linejoin="round"/>
<path d="M689 224 L704 225 L719 229 L740 231 L760 229" fill="none" stroke="#1f80c4" stroke-width="4" stroke-linejoin="round"/>
<path d="M757 241 L787 236 L787 239 M851 198 L918 198 L952 202 L981 207 L994 216 L1005 236 M962 198 L984 198 L984 210" fill="none" stroke="#2bb03a" stroke-width="4" stroke-linejoin="round"/>
<path d="M543 226.5 Q534.50 214.00 529.80 197.50 A13.8 13.8 0 1 1 556.20 197.50 Q551.50 214.00 543 226.5Z" fill="#cf4f88" stroke="#5e1d3c" stroke-width="1" stroke-opacity=".75" stroke-linejoin="round"/><path d="M543 226.5 Q534.50 214.00 529.80 197.50 A13.8 13.8 0 1 1 556.20 197.50 Q551.50 214.00 543 226.5Z" fill="none" stroke="#e889b3" stroke-width="1" transform="translate(543 193) scale(0.88) translate(-543 -193)" opacity=".8"/>
<path d="M537 229.5 Q528.50 217.00 523.80 200.50 A13.8 13.8 0 1 1 550.20 200.50 Q545.50 217.00 537 229.5Z" fill="#cf4f88" stroke="#5e1d3c" stroke-width="1" stroke-opacity=".75" stroke-linejoin="round"/><path d="M537 229.5 Q528.50 217.00 523.80 200.50 A13.8 13.8 0 1 1 550.20 200.50 Q545.50 217.00 537 229.5Z" fill="none" stroke="#e889b3" stroke-width="1" transform="translate(537 196) scale(0.88) translate(-537 -196)" opacity=".8"/><text x="537" y="201.6" font-size="16" class="pn">19</text>
<path d="M532 240.5 Q523.50 228.00 518.80 211.50 A13.8 13.8 0 1 1 545.20 211.50 Q540.50 228.00 532 240.5Z" fill="#5a33d0" stroke="#2c1470" stroke-width="1" stroke-opacity=".75" stroke-linejoin="round"/><path d="M532 240.5 Q523.50 228.00 518.80 211.50 A13.8 13.8 0 1 1 545.20 211.50 Q540.50 228.00 532 240.5Z" fill="none" stroke="#8a6ae8" stroke-width="1" transform="translate(532 207) scale(0.88) translate(-532 -207)" opacity=".8"/>
<path d="M532 245.5 Q523.50 233.00 518.80 216.50 A13.8 13.8 0 1 1 545.20 216.50 Q540.50 233.00 532 245.5Z" fill="#cf4f88" stroke="#5e1d3c" stroke-width="1" stroke-opacity=".75" stroke-linejoin="round"/><path d="M532 245.5 Q523.50 233.00 518.80 216.50 A13.8 13.8 0 1 1 545.20 216.50 Q540.50 233.00 532 245.5Z" fill="none" stroke="#e889b3" stroke-width="1" transform="translate(532 212) scale(0.88) translate(-532 -212)" opacity=".8"/>
<path d="M536 247.5 Q527.50 235.00 522.80 218.50 A13.8 13.8 0 1 1 549.20 218.50 Q544.50 235.00 536 247.5Z" fill="#cf4f88" stroke="#5e1d3c" stroke-width="1" stroke-opacity=".75" stroke-linejoin="round"/><path d="M536 247.5 Q527.50 235.00 522.80 218.50 A13.8 13.8 0 1 1 549.20 218.50 Q544.50 235.00 536 247.5Z" fill="none" stroke="#e889b3" stroke-width="1" transform="translate(536 214) scale(0.88) translate(-536 -214)" opacity=".8"/><text x="536" y="219.6" font-size="16" class="pn">1</text><text x="536" y="231.8" font-size="10.5" class="pm">M</text>
<path d="M561 237.5 Q552.50 225.00 547.80 208.50 A13.8 13.8 0 1 1 574.20 208.50 Q569.50 225.00 561 237.5Z" fill="#cf4f88" stroke="#5e1d3c" stroke-width="1" stroke-opacity=".75" stroke-linejoin="round"/><path d="M561 237.5 Q552.50 225.00 547.80 208.50 A13.8 13.8 0 1 1 574.20 208.50 Q569.50 225.00 561 237.5Z" fill="none" stroke="#e889b3" stroke-width="1" transform="translate(561 204) scale(0.88) translate(-561 -204)" opacity=".8"/>
<path d="M565 239.5 Q556.50 227.00 551.80 210.50 A13.8 13.8 0 1 1 578.20 210.50 Q573.50 227.00 565 239.5Z" fill="#cf4f88" stroke="#5e1d3c" stroke-width="1" stroke-opacity=".75" stroke-linejoin="round"/><path d="M565 239.5 Q556.50 227.00 551.80 210.50 A13.8 13.8 0 1 1 578.20 210.50 Q573.50 227.00 565 239.5Z" fill="none" stroke="#e889b3" stroke-width="1" transform="translate(565 206) scale(0.88) translate(-565 -206)" opacity=".8"/><text x="565" y="211.6" font-size="16" class="pn">27</text><text x="565" y="223.8" font-size="10.5" class="pm">M</text>
<path d="M548 269.5 Q539.50 257.00 534.80 240.50 A13.8 13.8 0 1 1 561.20 240.50 Q556.50 257.00 548 269.5Z" fill="#5a33d0" stroke="#2c1470" stroke-width="1" stroke-opacity=".75" stroke-linejoin="round"/><path d="M548 269.5 Q539.50 257.00 534.80 240.50 A13.8 13.8 0 1 1 561.20 240.50 Q556.50 257.00 548 269.5Z" fill="none" stroke="#8a6ae8" stroke-width="1" transform="translate(548 236) scale(0.88) translate(-548 -236)" opacity=".8"/>
<path d="M521 267.5 Q512.50 255.00 507.80 238.50 A13.8 13.8 0 1 1 534.20 238.50 Q529.50 255.00 521 267.5Z" fill="#cf4f88" stroke="#5e1d3c" stroke-width="1" stroke-opacity=".75" stroke-linejoin="round"/><path d="M521 267.5 Q512.50 255.00 507.80 238.50 A13.8 13.8 0 1 1 534.20 238.50 Q529.50 255.00 521 267.5Z" fill="none" stroke="#e889b3" stroke-width="1" transform="translate(521 234) scale(0.88) translate(-521 -234)" opacity=".8"/><text x="521" y="239.6" font-size="16" class="pn">13</text><text x="521" y="251.8" font-size="10.5" class="pm">M</text>
<path d="M541 273.5 Q532.50 261.00 527.80 244.50 A13.8 13.8 0 1 1 554.20 244.50 Q549.50 261.00 541 273.5Z" fill="#a345b0" stroke="#50205a" stroke-width="1" stroke-opacity=".75" stroke-linejoin="round"/><path d="M541 273.5 Q532.50 261.00 527.80 244.50 A13.8 13.8 0 1 1 554.20 244.50 Q549.50 261.00 541 273.5Z" fill="none" stroke="#c97ad2" stroke-width="1" transform="translate(541 240) scale(0.88) translate(-541 -240)" opacity=".8"/>
<path d="M544 275.5 Q535.50 263.00 530.80 246.50 A13.8 13.8 0 1 1 557.20 246.50 Q552.50 263.00 544 275.5Z" fill="#5a33d0" stroke="#2c1470" stroke-width="1" stroke-opacity=".75" stroke-linejoin="round"/><path d="M544 275.5 Q535.50 263.00 530.80 246.50 A13.8 13.8 0 1 1 557.20 246.50 Q552.50 263.00 544 275.5Z" fill="none" stroke="#8a6ae8" stroke-width="1" transform="translate(544 242) scale(0.88) translate(-544 -242)" opacity=".8"/>
<path d="M547 277.5 Q538.50 265.00 533.80 248.50 A13.8 13.8 0 1 1 560.20 248.50 Q555.50 265.00 547 277.5Z" fill="#cf4f88" stroke="#5e1d3c" stroke-width="1" stroke-opacity=".75" stroke-linejoin="round"/><path d="M547 277.5 Q538.50 265.00 533.80 248.50 A13.8 13.8 0 1 1 560.20 248.50 Q555.50 265.00 547 277.5Z" fill="none" stroke="#e889b3" stroke-width="1" transform="translate(547 244) scale(0.88) translate(-547 -244)" opacity=".8"/><text x="547" y="249.6" font-size="16" class="pn">10</text><text x="547" y="261.8" font-size="10.5" class="pm">M</text>
<path d="M636 172.5 Q627.50 160.00 622.80 143.50 A13.8 13.8 0 1 1 649.20 143.50 Q644.50 160.00 636 172.5Z" fill="#a345b0" stroke="#50205a" stroke-width="1" stroke-opacity=".75" stroke-linejoin="round"/><path d="M636 172.5 Q627.50 160.00 622.80 143.50 A13.8 13.8 0 1 1 649.20 143.50 Q644.50 160.00 636 172.5Z" fill="none" stroke="#c97ad2" stroke-width="1" transform="translate(636 139) scale(0.88) translate(-636 -139)" opacity=".8"/><text x="636" y="144.6" font-size="16" class="pn">12</text>
<path d="M628 188.5 Q619.50 176.00 614.80 159.50 A13.8 13.8 0 1 1 641.20 159.50 Q636.50 176.00 628 188.5Z" fill="#5a33d0" stroke="#2c1470" stroke-width="1" stroke-opacity=".75" stroke-linejoin="round"/><path d="M628 188.5 Q619.50 176.00 614.80 159.50 A13.8 13.8 0 1 1 641.20 159.50 Q636.50 176.00 628 188.5Z" fill="none" stroke="#8a6ae8" stroke-width="1" transform="translate(628 155) scale(0.88) translate(-628 -155)" opacity=".8"/><text x="628" y="160.6" font-size="16" class="pn">20</text>
<path d="M646 190.5 Q637.50 178.00 632.80 161.50 A13.8 13.8 0 1 1 659.20 161.50 Q654.50 178.00 646 190.5Z" fill="#5a33d0" stroke="#2c1470" stroke-width="1" stroke-opacity=".75" stroke-linejoin="round"/><path d="M646 190.5 Q637.50 178.00 632.80 161.50 A13.8 13.8 0 1 1 659.20 161.50 Q654.50 178.00 646 190.5Z" fill="none" stroke="#8a6ae8" stroke-width="1" transform="translate(646 157) scale(0.88) translate(-646 -157)" opacity=".8"/><text x="646" y="162.6" font-size="16" class="pn">7</text><text x="646" y="174.8" font-size="10.5" class="pm">M</text>
<path d="M624 207.5 Q615.50 195.00 610.80 178.50 A13.8 13.8 0 1 1 637.20 178.50 Q632.50 195.00 624 207.5Z" fill="#cf4f88" stroke="#5e1d3c" stroke-width="1" stroke-opacity=".75" stroke-linejoin="round"/><path d="M624 207.5 Q615.50 195.00 610.80 178.50 A13.8 13.8 0 1 1 637.20 178.50 Q632.50 195.00 624 207.5Z" fill="none" stroke="#e889b3" stroke-width="1" transform="translate(624 174) scale(0.88) translate(-624 -174)" opacity=".8"/><text x="624" y="179.6" font-size="16" class="pn">29</text><text x="624" y="191.8" font-size="10.5" class="pm">M</text>
<path d="M673 149.5 Q664.50 137.00 659.80 120.50 A13.8 13.8 0 1 1 686.20 120.50 Q681.50 137.00 673 149.5Z" fill="#5a33d0" stroke="#2c1470" stroke-width="1" stroke-opacity=".75" stroke-linejoin="round"/><path d="M673 149.5 Q664.50 137.00 659.80 120.50 A13.8 13.8 0 1 1 686.20 120.50 Q681.50 137.00 673 149.5Z" fill="none" stroke="#8a6ae8" stroke-width="1" transform="translate(673 116) scale(0.88) translate(-673 -116)" opacity=".8"/><text x="673" y="121.6" font-size="16" class="pn">1</text>
<path d="M675 162.5 Q666.50 150.00 661.80 133.50 A13.8 13.8 0 1 1 688.20 133.50 Q683.50 150.00 675 162.5Z" fill="#5a33d0" stroke="#2c1470" stroke-width="1" stroke-opacity=".75" stroke-linejoin="round"/><path d="M675 162.5 Q666.50 150.00 661.80 133.50 A13.8 13.8 0 1 1 688.20 133.50 Q683.50 150.00 675 162.5Z" fill="none" stroke="#8a6ae8" stroke-width="1" transform="translate(675 129) scale(0.88) translate(-675 -129)" opacity=".8"/><text x="675" y="134.6" font-size="16" class="pn">13</text>
<path d="M695 156.5 Q686.50 144.00 681.80 127.50 A13.8 13.8 0 1 1 708.20 127.50 Q703.50 144.00 695 156.5Z" fill="#5a33d0" stroke="#2c1470" stroke-width="1" stroke-opacity=".75" stroke-linejoin="round"/><path d="M695 156.5 Q686.50 144.00 681.80 127.50 A13.8 13.8 0 1 1 708.20 127.50 Q703.50 144.00 695 156.5Z" fill="none" stroke="#8a6ae8" stroke-width="1" transform="translate(695 123) scale(0.88) translate(-695 -123)" opacity=".8"/><text x="695" y="128.6" font-size="16" class="pn">9</text><text x="695" y="140.8" font-size="10.5" class="pm">M</text>
<path d="M667 178.5 Q658.50 166.00 653.80 149.50 A13.8 13.8 0 1 1 680.20 149.50 Q675.50 166.00 667 178.5Z" fill="#1d7dbf" stroke="#0b3d66" stroke-width="1" stroke-opacity=".75" stroke-linejoin="round"/><path d="M667 178.5 Q658.50 166.00 653.80 149.50 A13.8 13.8 0 1 1 680.20 149.50 Q675.50 166.00 667 178.5Z" fill="none" stroke="#5aaee2" stroke-width="1" transform="translate(667 145) scale(0.88) translate(-667 -145)" opacity=".8"/><text x="667" y="150.6" font-size="16" class="pn">10</text>
<path d="M662 193.5 Q653.50 181.00 648.80 164.50 A13.8 13.8 0 1 1 675.20 164.50 Q670.50 181.00 662 193.5Z" fill="#5a33d0" stroke="#2c1470" stroke-width="1" stroke-opacity=".75" stroke-linejoin="round"/><path d="M662 193.5 Q653.50 181.00 648.80 164.50 A13.8 13.8 0 1 1 675.20 164.50 Q670.50 181.00 662 193.5Z" fill="none" stroke="#8a6ae8" stroke-width="1" transform="translate(662 160) scale(0.88) translate(-662 -160)" opacity=".8"/>
<path d="M670 197.5 Q661.50 185.00 656.80 168.50 A13.8 13.8 0 1 1 683.20 168.50 Q678.50 185.00 670 197.5Z" fill="#1d7dbf" stroke="#0b3d66" stroke-width="1" stroke-opacity=".75" stroke-linejoin="round"/><path d="M670 197.5 Q661.50 185.00 656.80 168.50 A13.8 13.8 0 1 1 683.20 168.50 Q678.50 185.00 670 197.5Z" fill="none" stroke="#5aaee2" stroke-width="1" transform="translate(670 164) scale(0.88) translate(-670 -164)" opacity=".8"/><text x="670" y="169.6" font-size="16" class="pn">13</text><text x="670" y="181.8" font-size="10.5" class="pm">M</text>
<path d="M700 186.5 Q691.50 174.00 686.80 157.50 A13.8 13.8 0 1 1 713.20 157.50 Q708.50 174.00 700 186.5Z" fill="#1d7dbf" stroke="#0b3d66" stroke-width="1" stroke-opacity=".75" stroke-linejoin="round"/><path d="M700 186.5 Q691.50 174.00 686.80 157.50 A13.8 13.8 0 1 1 713.20 157.50 Q708.50 174.00 700 186.5Z" fill="none" stroke="#5aaee2" stroke-width="1" transform="translate(700 153) scale(0.88) translate(-700 -153)" opacity=".8"/><text x="700" y="158.6" font-size="16" class="pn">9</text>
<path d="M693 203.5 Q684.50 191.00 679.80 174.50 A13.8 13.8 0 1 1 706.20 174.50 Q701.50 191.00 693 203.5Z" fill="#1d7dbf" stroke="#0b3d66" stroke-width="1" stroke-opacity=".75" stroke-linejoin="round"/><path d="M693 203.5 Q684.50 191.00 679.80 174.50 A13.8 13.8 0 1 1 706.20 174.50 Q701.50 191.00 693 203.5Z" fill="none" stroke="#5aaee2" stroke-width="1" transform="translate(693 170) scale(0.88) translate(-693 -170)" opacity=".8"/><text x="693" y="175.6" font-size="16" class="pn">1</text>
<path d="M713 206.5 Q704.50 194.00 699.80 177.50 A13.8 13.8 0 1 1 726.20 177.50 Q721.50 194.00 713 206.5Z" fill="#1d7dbf" stroke="#0b3d66" stroke-width="1" stroke-opacity=".75" stroke-linejoin="round"/><path d="M713 206.5 Q704.50 194.00 699.80 177.50 A13.8 13.8 0 1 1 726.20 177.50 Q721.50 194.00 713 206.5Z" fill="none" stroke="#5aaee2" stroke-width="1" transform="translate(713 173) scale(0.88) translate(-713 -173)" opacity=".8"/>
<path d="M704 207.5 Q695.50 195.00 690.80 178.50 A13.8 13.8 0 1 1 717.20 178.50 Q712.50 195.00 704 207.5Z" fill="#1d7dbf" stroke="#0b3d66" stroke-width="1" stroke-opacity=".75" stroke-linejoin="round"/><path d="M704 207.5 Q695.50 195.00 690.80 178.50 A13.8 13.8 0 1 1 717.20 178.50 Q712.50 195.00 704 207.5Z" fill="none" stroke="#5aaee2" stroke-width="1" transform="translate(704 174) scale(0.88) translate(-704 -174)" opacity=".8"/><text x="704" y="179.6" font-size="16" class="pn">-</text>
<path d="M706 219.5 Q697.50 207.00 692.80 190.50 A13.8 13.8 0 1 1 719.20 190.50 Q714.50 207.00 706 219.5Z" fill="#1d7dbf" stroke="#0b3d66" stroke-width="1" stroke-opacity=".75" stroke-linejoin="round"/><path d="M706 219.5 Q697.50 207.00 692.80 190.50 A13.8 13.8 0 1 1 719.20 190.50 Q714.50 207.00 706 219.5Z" fill="none" stroke="#5aaee2" stroke-width="1" transform="translate(706 186) scale(0.88) translate(-706 -186)" opacity=".8"/>
<path d="M688 227.5 Q679.50 215.00 674.80 198.50 A13.8 13.8 0 1 1 701.20 198.50 Q696.50 215.00 688 227.5Z" fill="#1d7dbf" stroke="#0b3d66" stroke-width="1" stroke-opacity=".75" stroke-linejoin="round"/><path d="M688 227.5 Q679.50 215.00 674.80 198.50 A13.8 13.8 0 1 1 701.20 198.50 Q696.50 215.00 688 227.5Z" fill="none" stroke="#5aaee2" stroke-width="1" transform="translate(688 194) scale(0.88) translate(-688 -194)" opacity=".8"/><text x="688" y="199.6" font-size="16" class="pn">3</text><text x="688" y="211.8" font-size="10.5" class="pm">M</text>
<path d="M709 229.5 Q700.50 217.00 695.80 200.50 A13.8 13.8 0 1 1 722.20 200.50 Q717.50 217.00 709 229.5Z" fill="#1d7dbf" stroke="#0b3d66" stroke-width="1" stroke-opacity=".75" stroke-linejoin="round"/><path d="M709 229.5 Q700.50 217.00 695.80 200.50 A13.8 13.8 0 1 1 722.20 200.50 Q717.50 217.00 709 229.5Z" fill="none" stroke="#5aaee2" stroke-width="1" transform="translate(709 196) scale(0.88) translate(-709 -196)" opacity=".8"/>
<path d="M712 235.5 Q703.50 223.00 698.80 206.50 A13.8 13.8 0 1 1 725.20 206.50 Q720.50 223.00 712 235.5Z" fill="#1d7dbf" stroke="#0b3d66" stroke-width="1" stroke-opacity=".75" stroke-linejoin="round"/><path d="M712 235.5 Q703.50 223.00 698.80 206.50 A13.8 13.8 0 1 1 725.20 206.50 Q720.50 223.00 712 235.5Z" fill="none" stroke="#5aaee2" stroke-width="1" transform="translate(712 202) scale(0.88) translate(-712 -202)" opacity=".8"/><text x="712" y="207.6" font-size="16" class="pn">25</text><text x="712" y="219.8" font-size="10.5" class="pm">M</text>
<path d="M719 79.5 Q710.50 67.00 705.80 50.50 A13.8 13.8 0 1 1 732.20 50.50 Q727.50 67.00 719 79.5Z" fill="#d6cf35" stroke="#6f6a10" stroke-width="1" stroke-opacity=".75" stroke-linejoin="round"/><path d="M719 79.5 Q710.50 67.00 705.80 50.50 A13.8 13.8 0 1 1 732.20 50.50 Q727.50 67.00 719 79.5Z" fill="none" stroke="#eeea80" stroke-width="1" transform="translate(719 46) scale(0.88) translate(-719 -46)" opacity=".8"/>
<path d="M716 95.5 Q707.50 83.00 702.80 66.50 A13.8 13.8 0 1 1 729.20 66.50 Q724.50 83.00 716 95.5Z" fill="#d6cf35" stroke="#6f6a10" stroke-width="1" stroke-opacity=".75" stroke-linejoin="round"/><path d="M716 95.5 Q707.50 83.00 702.80 66.50 A13.8 13.8 0 1 1 729.20 66.50 Q724.50 83.00 716 95.5Z" fill="none" stroke="#eeea80" stroke-width="1" transform="translate(716 62) scale(0.88) translate(-716 -62)" opacity=".8"/>
<path d="M718 105.5 Q709.50 93.00 704.80 76.50 A13.8 13.8 0 1 1 731.20 76.50 Q726.50 93.00 718 105.5Z" fill="#d6cf35" stroke="#6f6a10" stroke-width="1" stroke-opacity=".75" stroke-linejoin="round"/><path d="M718 105.5 Q709.50 93.00 704.80 76.50 A13.8 13.8 0 1 1 731.20 76.50 Q726.50 93.00 718 105.5Z" fill="none" stroke="#eeea80" stroke-width="1" transform="translate(718 72) scale(0.88) translate(-718 -72)" opacity=".8"/>
<path d="M722 117.5 Q713.50 105.00 708.80 88.50 A13.8 13.8 0 1 1 735.20 88.50 Q730.50 105.00 722 117.5Z" fill="#d6cf35" stroke="#6f6a10" stroke-width="1" stroke-opacity=".75" stroke-linejoin="round"/><path d="M722 117.5 Q713.50 105.00 708.80 88.50 A13.8 13.8 0 1 1 735.20 88.50 Q730.50 105.00 722 117.5Z" fill="none" stroke="#eeea80" stroke-width="1" transform="translate(722 84) scale(0.88) translate(-722 -84)" opacity=".8"/>
<path d="M724 113.5 Q715.50 101.00 710.80 84.50 A13.8 13.8 0 1 1 737.20 84.50 Q732.50 101.00 724 113.5Z" fill="#d6cf35" stroke="#6f6a10" stroke-width="1" stroke-opacity=".75" stroke-linejoin="round"/><path d="M724 113.5 Q715.50 101.00 710.80 84.50 A13.8 13.8 0 1 1 737.20 84.50 Q732.50 101.00 724 113.5Z" fill="none" stroke="#eeea80" stroke-width="1" transform="translate(724 80) scale(0.88) translate(-724 -80)" opacity=".8"/>
<path d="M722 101.5 Q713.50 89.00 708.80 72.50 A13.8 13.8 0 1 1 735.20 72.50 Q730.50 89.00 722 101.5Z" fill="#d6cf35" stroke="#6f6a10" stroke-width="1" stroke-opacity=".75" stroke-linejoin="round"/><path d="M722 101.5 Q713.50 89.00 708.80 72.50 A13.8 13.8 0 1 1 735.20 72.50 Q730.50 89.00 722 101.5Z" fill="none" stroke="#eeea80" stroke-width="1" transform="translate(722 68) scale(0.88) translate(-722 -68)" opacity=".8"/>
<path d="M735 117.5 Q726.50 105.00 721.80 88.50 A13.8 13.8 0 1 1 748.20 88.50 Q743.50 105.00 735 117.5Z" fill="#d6cf35" stroke="#6f6a10" stroke-width="1" stroke-opacity=".75" stroke-linejoin="round"/><path d="M735 117.5 Q726.50 105.00 721.80 88.50 A13.8 13.8 0 1 1 748.20 88.50 Q743.50 105.00 735 117.5Z" fill="none" stroke="#eeea80" stroke-width="1" transform="translate(735 84) scale(0.88) translate(-735 -84)" opacity=".8"/>
<path d="M728 109.5 Q719.50 97.00 714.80 80.50 A13.8 13.8 0 1 1 741.20 80.50 Q736.50 97.00 728 109.5Z" fill="#d6cf35" stroke="#6f6a10" stroke-width="1" stroke-opacity=".75" stroke-linejoin="round"/><path d="M728 109.5 Q719.50 97.00 714.80 80.50 A13.8 13.8 0 1 1 741.20 80.50 Q736.50 97.00 728 109.5Z" fill="none" stroke="#eeea80" stroke-width="1" transform="translate(728 76) scale(0.88) translate(-728 -76)" opacity=".8"/>
<path d="M719 79.5 Q710.50 67.00 705.80 50.50 A13.8 13.8 0 1 1 732.20 50.50 Q727.50 67.00 719 79.5Z" fill="#d6cf35" stroke="#6f6a10" stroke-width="1" stroke-opacity=".75" stroke-linejoin="round"/><path d="M719 79.5 Q710.50 67.00 705.80 50.50 A13.8 13.8 0 1 1 732.20 50.50 Q727.50 67.00 719 79.5Z" fill="none" stroke="#eeea80" stroke-width="1" transform="translate(719 46) scale(0.88) translate(-719 -46)" opacity=".8"/><text x="719" y="51.6" font-size="16" class="pn">8</text>
<path d="M755 80.5 Q746.50 68.00 741.80 51.50 A13.8 13.8 0 1 1 768.20 51.50 Q763.50 68.00 755 80.5Z" fill="#d6cf35" stroke="#6f6a10" stroke-width="1" stroke-opacity=".75" stroke-linejoin="round"/><path d="M755 80.5 Q746.50 68.00 741.80 51.50 A13.8 13.8 0 1 1 768.20 51.50 Q763.50 68.00 755 80.5Z" fill="none" stroke="#eeea80" stroke-width="1" transform="translate(755 47) scale(0.88) translate(-755 -47)" opacity=".8"/>
<path d="M762 81.5 Q753.50 69.00 748.80 52.50 A13.8 13.8 0 1 1 775.20 52.50 Q770.50 69.00 762 81.5Z" fill="#d6cf35" stroke="#6f6a10" stroke-width="1" stroke-opacity=".75" stroke-linejoin="round"/><path d="M762 81.5 Q753.50 69.00 748.80 52.50 A13.8 13.8 0 1 1 775.20 52.50 Q770.50 69.00 762 81.5Z" fill="none" stroke="#eeea80" stroke-width="1" transform="translate(762 48) scale(0.88) translate(-762 -48)" opacity=".8"/><text x="762" y="53.6" font-size="16" class="pn">14</text><text x="762" y="65.8" font-size="10.5" class="pm">M</text>
<path d="M742 98.5 Q733.50 86.00 728.80 69.50 A13.8 13.8 0 1 1 755.20 69.50 Q750.50 86.00 742 98.5Z" fill="#d6cf35" stroke="#6f6a10" stroke-width="1" stroke-opacity=".75" stroke-linejoin="round"/><path d="M742 98.5 Q733.50 86.00 728.80 69.50 A13.8 13.8 0 1 1 755.20 69.50 Q750.50 86.00 742 98.5Z" fill="none" stroke="#eeea80" stroke-width="1" transform="translate(742 65) scale(0.88) translate(-742 -65)" opacity=".8"/><text x="742" y="70.6" font-size="16" class="pn">18</text>
<path d="M752 105.5 Q743.50 93.00 738.80 76.50 A13.8 13.8 0 1 1 765.20 76.50 Q760.50 93.00 752 105.5Z" fill="#d6cf35" stroke="#6f6a10" stroke-width="1" stroke-opacity=".75" stroke-linejoin="round"/><path d="M752 105.5 Q743.50 93.00 738.80 76.50 A13.8 13.8 0 1 1 765.20 76.50 Q760.50 93.00 752 105.5Z" fill="none" stroke="#eeea80" stroke-width="1" transform="translate(752 72) scale(0.88) translate(-752 -72)" opacity=".8"/>
<path d="M782 110.5 Q773.50 98.00 768.80 81.50 A13.8 13.8 0 1 1 795.20 81.50 Q790.50 98.00 782 110.5Z" fill="#d6cf35" stroke="#6f6a10" stroke-width="1" stroke-opacity=".75" stroke-linejoin="round"/><path d="M782 110.5 Q773.50 98.00 768.80 81.50 A13.8 13.8 0 1 1 795.20 81.50 Q790.50 98.00 782 110.5Z" fill="none" stroke="#eeea80" stroke-width="1" transform="translate(782 77) scale(0.88) translate(-782 -77)" opacity=".8"/><text x="782" y="82.6" font-size="16" class="pn">16</text><text x="782" y="94.8" font-size="10.5" class="pm">M</text>
<path d="M758 121.5 Q749.50 109.00 744.80 92.50 A13.8 13.8 0 1 1 771.20 92.50 Q766.50 109.00 758 121.5Z" fill="#d6cf35" stroke="#6f6a10" stroke-width="1" stroke-opacity=".75" stroke-linejoin="round"/><path d="M758 121.5 Q749.50 109.00 744.80 92.50 A13.8 13.8 0 1 1 771.20 92.50 Q766.50 109.00 758 121.5Z" fill="none" stroke="#eeea80" stroke-width="1" transform="translate(758 88) scale(0.88) translate(-758 -88)" opacity=".8"/>
<path d="M765 124.5 Q756.50 112.00 751.80 95.50 A13.8 13.8 0 1 1 778.20 95.50 Q773.50 112.00 765 124.5Z" fill="#d6cf35" stroke="#6f6a10" stroke-width="1" stroke-opacity=".75" stroke-linejoin="round"/><path d="M765 124.5 Q756.50 112.00 751.80 95.50 A13.8 13.8 0 1 1 778.20 95.50 Q773.50 112.00 765 124.5Z" fill="none" stroke="#eeea80" stroke-width="1" transform="translate(765 91) scale(0.88) translate(-765 -91)" opacity=".8"/><text x="765" y="96.6" font-size="16" class="pn">16</text>
<path d="M725 125.5 Q716.50 113.00 711.80 96.50 A13.8 13.8 0 1 1 738.20 96.50 Q733.50 113.00 725 125.5Z" fill="#d6cf35" stroke="#6f6a10" stroke-width="1" stroke-opacity=".75" stroke-linejoin="round"/><path d="M725 125.5 Q716.50 113.00 711.80 96.50 A13.8 13.8 0 1 1 738.20 96.50 Q733.50 113.00 725 125.5Z" fill="none" stroke="#eeea80" stroke-width="1" transform="translate(725 92) scale(0.88) translate(-725 -92)" opacity=".8"/><text x="725" y="97.6" font-size="16" class="pn">30</text><text x="725" y="109.8" font-size="10.5" class="pm">M</text>
<path d="M754.6 131.8 Q746.10 119.30 741.40 102.80 A13.8 13.8 0 1 1 767.80 102.80 Q763.10 119.30 754.6 131.8Z" fill="#ea8a38" stroke="#7a4412" stroke-width="1" stroke-opacity=".75" stroke-linejoin="round"/><path d="M754.6 131.8 Q746.10 119.30 741.40 102.80 A13.8 13.8 0 1 1 767.80 102.80 Q763.10 119.30 754.6 131.8Z" fill="none" stroke="#f7b478" stroke-width="1" transform="translate(754.6 98.3) scale(0.88) translate(-754.6 -98.3)" opacity=".8"/>
<path d="M778.6 135.2 Q770.10 122.70 765.40 106.20 A13.8 13.8 0 1 1 791.80 106.20 Q787.10 122.70 778.6 135.2Z" fill="#ea8a38" stroke="#7a4412" stroke-width="1" stroke-opacity=".75" stroke-linejoin="round"/><path d="M778.6 135.2 Q770.10 122.70 765.40 106.20 A13.8 13.8 0 1 1 791.80 106.20 Q787.10 122.70 778.6 135.2Z" fill="none" stroke="#f7b478" stroke-width="1" transform="translate(778.6 101.7) scale(0.88) translate(-778.6 -101.7)" opacity=".8"/>
<path d="M753.5 135.2 Q745.00 122.70 740.30 106.20 A13.8 13.8 0 1 1 766.70 106.20 Q762.00 122.70 753.5 135.2Z" fill="#ea8a38" stroke="#7a4412" stroke-width="1" stroke-opacity=".75" stroke-linejoin="round"/><path d="M753.5 135.2 Q745.00 122.70 740.30 106.20 A13.8 13.8 0 1 1 766.70 106.20 Q762.00 122.70 753.5 135.2Z" fill="none" stroke="#f7b478" stroke-width="1" transform="translate(753.5 101.7) scale(0.88) translate(-753.5 -101.7)" opacity=".8"/>
<path d="M775.7 135.4 Q767.20 122.90 762.50 106.40 A13.8 13.8 0 1 1 788.90 106.40 Q784.20 122.90 775.7 135.4Z" fill="#ea8a38" stroke="#7a4412" stroke-width="1" stroke-opacity=".75" stroke-linejoin="round"/><path d="M775.7 135.4 Q767.20 122.90 762.50 106.40 A13.8 13.8 0 1 1 788.90 106.40 Q784.20 122.90 775.7 135.4Z" fill="none" stroke="#f7b478" stroke-width="1" transform="translate(775.7 101.9) scale(0.88) translate(-775.7 -101.9)" opacity=".8"/>
<path d="M776.5 144.3 Q768.00 131.80 763.30 115.30 A13.8 13.8 0 1 1 789.70 115.30 Q785.00 131.80 776.5 144.3Z" fill="#ea8a38" stroke="#7a4412" stroke-width="1" stroke-opacity=".75" stroke-linejoin="round"/><path d="M776.5 144.3 Q768.00 131.80 763.30 115.30 A13.8 13.8 0 1 1 789.70 115.30 Q785.00 131.80 776.5 144.3Z" fill="none" stroke="#f7b478" stroke-width="1" transform="translate(776.5 110.8) scale(0.88) translate(-776.5 -110.8)" opacity=".8"/>
<path d="M761.7 144.3 Q753.20 131.80 748.50 115.30 A13.8 13.8 0 1 1 774.90 115.30 Q770.20 131.80 761.7 144.3Z" fill="#ea8a38" stroke="#7a4412" stroke-width="1" stroke-opacity=".75" stroke-linejoin="round"/><path d="M761.7 144.3 Q753.20 131.80 748.50 115.30 A13.8 13.8 0 1 1 774.90 115.30 Q770.20 131.80 761.7 144.3Z" fill="none" stroke="#f7b478" stroke-width="1" transform="translate(761.7 110.8) scale(0.88) translate(-761.7 -110.8)" opacity=".8"/>
<path d="M778.6 145.6 Q770.10 133.10 765.40 116.60 A13.8 13.8 0 1 1 791.80 116.60 Q787.10 133.10 778.6 145.6Z" fill="#ea8a38" stroke="#7a4412" stroke-width="1" stroke-opacity=".75" stroke-linejoin="round"/><path d="M778.6 145.6 Q770.10 133.10 765.40 116.60 A13.8 13.8 0 1 1 791.80 116.60 Q787.10 133.10 778.6 145.6Z" fill="none" stroke="#f7b478" stroke-width="1" transform="translate(778.6 112.1) scale(0.88) translate(-778.6 -112.1)" opacity=".8"/>
<path d="M781.4 150.7 Q772.90 138.20 768.20 121.70 A13.8 13.8 0 1 1 794.60 121.70 Q789.90 138.20 781.4 150.7Z" fill="#ea8a38" stroke="#7a4412" stroke-width="1" stroke-opacity=".75" stroke-linejoin="round"/><path d="M781.4 150.7 Q772.90 138.20 768.20 121.70 A13.8 13.8 0 1 1 794.60 121.70 Q789.90 138.20 781.4 150.7Z" fill="none" stroke="#f7b478" stroke-width="1" transform="translate(781.4 117.2) scale(0.88) translate(-781.4 -117.2)" opacity=".8"/>
<path d="M743.8 151.3 Q735.30 138.80 730.60 122.30 A13.8 13.8 0 1 1 757.00 122.30 Q752.30 138.80 743.8 151.3Z" fill="#ea8a38" stroke="#7a4412" stroke-width="1" stroke-opacity=".75" stroke-linejoin="round"/><path d="M743.8 151.3 Q735.30 138.80 730.60 122.30 A13.8 13.8 0 1 1 757.00 122.30 Q752.30 138.80 743.8 151.3Z" fill="none" stroke="#f7b478" stroke-width="1" transform="translate(743.8 117.8) scale(0.88) translate(-743.8 -117.8)" opacity=".8"/>
<path d="M751.9 153.1 Q743.40 140.60 738.70 124.10 A13.8 13.8 0 1 1 765.10 124.10 Q760.40 140.60 751.9 153.1Z" fill="#ea8a38" stroke="#7a4412" stroke-width="1" stroke-opacity=".75" stroke-linejoin="round"/><path d="M751.9 153.1 Q743.40 140.60 738.70 124.10 A13.8 13.8 0 1 1 765.10 124.10 Q760.40 140.60 751.9 153.1Z" fill="none" stroke="#f7b478" stroke-width="1" transform="translate(751.9 119.6) scale(0.88) translate(-751.9 -119.6)" opacity=".8"/>
<path d="M775.7 160.1 Q767.20 147.60 762.50 131.10 A13.8 13.8 0 1 1 788.90 131.10 Q784.20 147.60 775.7 160.1Z" fill="#ea8a38" stroke="#7a4412" stroke-width="1" stroke-opacity=".75" stroke-linejoin="round"/><path d="M775.7 160.1 Q767.20 147.60 762.50 131.10 A13.8 13.8 0 1 1 788.90 131.10 Q784.20 147.60 775.7 160.1Z" fill="none" stroke="#f7b478" stroke-width="1" transform="translate(775.7 126.6) scale(0.88) translate(-775.7 -126.6)" opacity=".8"/>
<path d="M768.0 169.0 Q759.50 156.50 754.80 140.00 A13.8 13.8 0 1 1 781.20 140.00 Q776.50 156.50 768.0 169.0Z" fill="#ea8a38" stroke="#7a4412" stroke-width="1" stroke-opacity=".75" stroke-linejoin="round"/><path d="M768.0 169.0 Q759.50 156.50 754.80 140.00 A13.8 13.8 0 1 1 781.20 140.00 Q776.50 156.50 768.0 169.0Z" fill="none" stroke="#f7b478" stroke-width="1" transform="translate(768.0 135.5) scale(0.88) translate(-768.0 -135.5)" opacity=".8"/>
<path d="M797.8 174.3 Q789.30 161.80 784.60 145.30 A13.8 13.8 0 1 1 811.00 145.30 Q806.30 161.80 797.8 174.3Z" fill="#ea8a38" stroke="#7a4412" stroke-width="1" stroke-opacity=".75" stroke-linejoin="round"/><path d="M797.8 174.3 Q789.30 161.80 784.60 145.30 A13.8 13.8 0 1 1 811.00 145.30 Q806.30 161.80 797.8 174.3Z" fill="none" stroke="#f7b478" stroke-width="1" transform="translate(797.8 140.8) scale(0.88) translate(-797.8 -140.8)" opacity=".8"/>
<path d="M799.7 177.9 Q791.20 165.40 786.50 148.90 A13.8 13.8 0 1 1 812.90 148.90 Q808.20 165.40 799.7 177.9Z" fill="#ea8a38" stroke="#7a4412" stroke-width="1" stroke-opacity=".75" stroke-linejoin="round"/><path d="M799.7 177.9 Q791.20 165.40 786.50 148.90 A13.8 13.8 0 1 1 812.90 148.90 Q808.20 165.40 799.7 177.9Z" fill="none" stroke="#f7b478" stroke-width="1" transform="translate(799.7 144.4) scale(0.88) translate(-799.7 -144.4)" opacity=".8"/>
<path d="M791.3 178.1 Q782.80 165.60 778.10 149.10 A13.8 13.8 0 1 1 804.50 149.10 Q799.80 165.60 791.3 178.1Z" fill="#ea8a38" stroke="#7a4412" stroke-width="1" stroke-opacity=".75" stroke-linejoin="round"/><path d="M791.3 178.1 Q782.80 165.60 778.10 149.10 A13.8 13.8 0 1 1 804.50 149.10 Q799.80 165.60 791.3 178.1Z" fill="none" stroke="#f7b478" stroke-width="1" transform="translate(791.3 144.6) scale(0.88) translate(-791.3 -144.6)" opacity=".8"/>
<path d="M789.4 178.5 Q780.90 166.00 776.20 149.50 A13.8 13.8 0 1 1 802.60 149.50 Q797.90 166.00 789.4 178.5Z" fill="#ea8a38" stroke="#7a4412" stroke-width="1" stroke-opacity=".75" stroke-linejoin="round"/><path d="M789.4 178.5 Q780.90 166.00 776.20 149.50 A13.8 13.8 0 1 1 802.60 149.50 Q797.90 166.00 789.4 178.5Z" fill="none" stroke="#f7b478" stroke-width="1" transform="translate(789.4 145.0) scale(0.88) translate(-789.4 -145.0)" opacity=".8"/>
<path d="M750.5 185.6 Q742.00 173.10 737.30 156.60 A13.8 13.8 0 1 1 763.70 156.60 Q759.00 173.10 750.5 185.6Z" fill="#ea8a38" stroke="#7a4412" stroke-width="1" stroke-opacity=".75" stroke-linejoin="round"/><path d="M750.5 185.6 Q742.00 173.10 737.30 156.60 A13.8 13.8 0 1 1 763.70 156.60 Q759.00 173.10 750.5 185.6Z" fill="none" stroke="#f7b478" stroke-width="1" transform="translate(750.5 152.1) scale(0.88) translate(-750.5 -152.1)" opacity=".8"/>
<path d="M793.8 188.3 Q785.30 175.80 780.60 159.30 A13.8 13.8 0 1 1 807.00 159.30 Q802.30 175.80 793.8 188.3Z" fill="#ea8a38" stroke="#7a4412" stroke-width="1" stroke-opacity=".75" stroke-linejoin="round"/><path d="M793.8 188.3 Q785.30 175.80 780.60 159.30 A13.8 13.8 0 1 1 807.00 159.30 Q802.30 175.80 793.8 188.3Z" fill="none" stroke="#f7b478" stroke-width="1" transform="translate(793.8 154.8) scale(0.88) translate(-793.8 -154.8)" opacity=".8"/>
<path d="M789.1 188.7 Q780.60 176.20 775.90 159.70 A13.8 13.8 0 1 1 802.30 159.70 Q797.60 176.20 789.1 188.7Z" fill="#ea8a38" stroke="#7a4412" stroke-width="1" stroke-opacity=".75" stroke-linejoin="round"/><path d="M789.1 188.7 Q780.60 176.20 775.90 159.70 A13.8 13.8 0 1 1 802.30 159.70 Q797.60 176.20 789.1 188.7Z" fill="none" stroke="#f7b478" stroke-width="1" transform="translate(789.1 155.2) scale(0.88) translate(-789.1 -155.2)" opacity=".8"/>
<path d="M757.8 189.9 Q749.30 177.40 744.60 160.90 A13.8 13.8 0 1 1 771.00 160.90 Q766.30 177.40 757.8 189.9Z" fill="#ea8a38" stroke="#7a4412" stroke-width="1" stroke-opacity=".75" stroke-linejoin="round"/><path d="M757.8 189.9 Q749.30 177.40 744.60 160.90 A13.8 13.8 0 1 1 771.00 160.90 Q766.30 177.40 757.8 189.9Z" fill="none" stroke="#f7b478" stroke-width="1" transform="translate(757.8 156.4) scale(0.88) translate(-757.8 -156.4)" opacity=".8"/>
<path d="M784.3 190.6 Q775.80 178.10 771.10 161.60 A13.8 13.8 0 1 1 797.50 161.60 Q792.80 178.10 784.3 190.6Z" fill="#ea8a38" stroke="#7a4412" stroke-width="1" stroke-opacity=".75" stroke-linejoin="round"/><path d="M784.3 190.6 Q775.80 178.10 771.10 161.60 A13.8 13.8 0 1 1 797.50 161.60 Q792.80 178.10 784.3 190.6Z" fill="none" stroke="#f7b478" stroke-width="1" transform="translate(784.3 157.1) scale(0.88) translate(-784.3 -157.1)" opacity=".8"/>
<path d="M759.0 191.9 Q750.50 179.40 745.80 162.90 A13.8 13.8 0 1 1 772.20 162.90 Q767.50 179.40 759.0 191.9Z" fill="#ea8a38" stroke="#7a4412" stroke-width="1" stroke-opacity=".75" stroke-linejoin="round"/><path d="M759.0 191.9 Q750.50 179.40 745.80 162.90 A13.8 13.8 0 1 1 772.20 162.90 Q767.50 179.40 759.0 191.9Z" fill="none" stroke="#f7b478" stroke-width="1" transform="translate(759.0 158.4) scale(0.88) translate(-759.0 -158.4)" opacity=".8"/>
<path d="M769.0 206.3 Q760.50 193.80 755.80 177.30 A13.8 13.8 0 1 1 782.20 177.30 Q777.50 193.80 769.0 206.3Z" fill="#ea8a38" stroke="#7a4412" stroke-width="1" stroke-opacity=".75" stroke-linejoin="round"/><path d="M769.0 206.3 Q760.50 193.80 755.80 177.30 A13.8 13.8 0 1 1 782.20 177.30 Q777.50 193.80 769.0 206.3Z" fill="none" stroke="#f7b478" stroke-width="1" transform="translate(769.0 172.8) scale(0.88) translate(-769.0 -172.8)" opacity=".8"/>
<path d="M754.1 209.2 Q745.60 196.70 740.90 180.20 A13.8 13.8 0 1 1 767.30 180.20 Q762.60 196.70 754.1 209.2Z" fill="#ea8a38" stroke="#7a4412" stroke-width="1" stroke-opacity=".75" stroke-linejoin="round"/><path d="M754.1 209.2 Q745.60 196.70 740.90 180.20 A13.8 13.8 0 1 1 767.30 180.20 Q762.60 196.70 754.1 209.2Z" fill="none" stroke="#f7b478" stroke-width="1" transform="translate(754.1 175.7) scale(0.88) translate(-754.1 -175.7)" opacity=".8"/>
<path d="M760.7 212.6 Q752.20 200.10 747.50 183.60 A13.8 13.8 0 1 1 773.90 183.60 Q769.20 200.10 760.7 212.6Z" fill="#ea8a38" stroke="#7a4412" stroke-width="1" stroke-opacity=".75" stroke-linejoin="round"/><path d="M760.7 212.6 Q752.20 200.10 747.50 183.60 A13.8 13.8 0 1 1 773.90 183.60 Q769.20 200.10 760.7 212.6Z" fill="none" stroke="#f7b478" stroke-width="1" transform="translate(760.7 179.1) scale(0.88) translate(-760.7 -179.1)" opacity=".8"/>
<path d="M776.3 219.6 Q767.80 207.10 763.10 190.60 A13.8 13.8 0 1 1 789.50 190.60 Q784.80 207.10 776.3 219.6Z" fill="#ea8a38" stroke="#7a4412" stroke-width="1" stroke-opacity=".75" stroke-linejoin="round"/><path d="M776.3 219.6 Q767.80 207.10 763.10 190.60 A13.8 13.8 0 1 1 789.50 190.60 Q784.80 207.10 776.3 219.6Z" fill="none" stroke="#f7b478" stroke-width="1" transform="translate(776.3 186.1) scale(0.88) translate(-776.3 -186.1)" opacity=".8"/>
<path d="M781.7 220.8 Q773.20 208.30 768.50 191.80 A13.8 13.8 0 1 1 794.90 191.80 Q790.20 208.30 781.7 220.8Z" fill="#ea8a38" stroke="#7a4412" stroke-width="1" stroke-opacity=".75" stroke-linejoin="round"/><path d="M781.7 220.8 Q773.20 208.30 768.50 191.80 A13.8 13.8 0 1 1 794.90 191.80 Q790.20 208.30 781.7 220.8Z" fill="none" stroke="#f7b478" stroke-width="1" transform="translate(781.7 187.3) scale(0.88) translate(-781.7 -187.3)" opacity=".8"/>
<path d="M773.0 223.4 Q764.50 210.90 759.80 194.40 A13.8 13.8 0 1 1 786.20 194.40 Q781.50 210.90 773.0 223.4Z" fill="#ea8a38" stroke="#7a4412" stroke-width="1" stroke-opacity=".75" stroke-linejoin="round"/><path d="M773.0 223.4 Q764.50 210.90 759.80 194.40 A13.8 13.8 0 1 1 786.20 194.40 Q781.50 210.90 773.0 223.4Z" fill="none" stroke="#f7b478" stroke-width="1" transform="translate(773.0 189.9) scale(0.88) translate(-773.0 -189.9)" opacity=".8"/>
<path d="M781.4 225.2 Q772.90 212.70 768.20 196.20 A13.8 13.8 0 1 1 794.60 196.20 Q789.90 212.70 781.4 225.2Z" fill="#ea8a38" stroke="#7a4412" stroke-width="1" stroke-opacity=".75" stroke-linejoin="round"/><path d="M781.4 225.2 Q772.90 212.70 768.20 196.20 A13.8 13.8 0 1 1 794.60 196.20 Q789.90 212.70 781.4 225.2Z" fill="none" stroke="#f7b478" stroke-width="1" transform="translate(781.4 191.7) scale(0.88) translate(-781.4 -191.7)" opacity=".8"/>
<path d="M779.3 226.0 Q770.80 213.50 766.10 197.00 A13.8 13.8 0 1 1 792.50 197.00 Q787.80 213.50 779.3 226.0Z" fill="#ea8a38" stroke="#7a4412" stroke-width="1" stroke-opacity=".75" stroke-linejoin="round"/><path d="M779.3 226.0 Q770.80 213.50 766.10 197.00 A13.8 13.8 0 1 1 792.50 197.00 Q787.80 213.50 779.3 226.0Z" fill="none" stroke="#f7b478" stroke-width="1" transform="translate(779.3 192.5) scale(0.88) translate(-779.3 -192.5)" opacity=".8"/>
<path d="M763.9 226.7 Q755.40 214.20 750.70 197.70 A13.8 13.8 0 1 1 777.10 197.70 Q772.40 214.20 763.9 226.7Z" fill="#ea8a38" stroke="#7a4412" stroke-width="1" stroke-opacity=".75" stroke-linejoin="round"/><path d="M763.9 226.7 Q755.40 214.20 750.70 197.70 A13.8 13.8 0 1 1 777.10 197.70 Q772.40 214.20 763.9 226.7Z" fill="none" stroke="#f7b478" stroke-width="1" transform="translate(763.9 193.2) scale(0.88) translate(-763.9 -193.2)" opacity=".8"/>
<path d="M790.9 229.8 Q782.40 217.30 777.70 200.80 A13.8 13.8 0 1 1 804.10 200.80 Q799.40 217.30 790.9 229.8Z" fill="#ea8a38" stroke="#7a4412" stroke-width="1" stroke-opacity=".75" stroke-linejoin="round"/><path d="M790.9 229.8 Q782.40 217.30 777.70 200.80 A13.8 13.8 0 1 1 804.10 200.80 Q799.40 217.30 790.9 229.8Z" fill="none" stroke="#f7b478" stroke-width="1" transform="translate(790.9 196.3) scale(0.88) translate(-790.9 -196.3)" opacity=".8"/>
<path d="M790.5 232.4 Q782.00 219.90 777.30 203.40 A13.8 13.8 0 1 1 803.70 203.40 Q799.00 219.90 790.5 232.4Z" fill="#ea8a38" stroke="#7a4412" stroke-width="1" stroke-opacity=".75" stroke-linejoin="round"/><path d="M790.5 232.4 Q782.00 219.90 777.30 203.40 A13.8 13.8 0 1 1 803.70 203.40 Q799.00 219.90 790.5 232.4Z" fill="none" stroke="#f7b478" stroke-width="1" transform="translate(790.5 198.9) scale(0.88) translate(-790.5 -198.9)" opacity=".8"/>
<path d="M790.7 232.6 Q782.20 220.10 777.50 203.60 A13.8 13.8 0 1 1 803.90 203.60 Q799.20 220.10 790.7 232.6Z" fill="#ea8a38" stroke="#7a4412" stroke-width="1" stroke-opacity=".75" stroke-linejoin="round"/><path d="M790.7 232.6 Q782.20 220.10 777.50 203.60 A13.8 13.8 0 1 1 803.90 203.60 Q799.20 220.10 790.7 232.6Z" fill="none" stroke="#f7b478" stroke-width="1" transform="translate(790.7 199.1) scale(0.88) translate(-790.7 -199.1)" opacity=".8"/>
<path d="M746 130.5 Q737.50 118.00 732.80 101.50 A13.8 13.8 0 1 1 759.20 101.50 Q754.50 118.00 746 130.5Z" fill="#ea8a38" stroke="#7a4412" stroke-width="1" stroke-opacity=".75" stroke-linejoin="round"/><path d="M746 130.5 Q737.50 118.00 732.80 101.50 A13.8 13.8 0 1 1 759.20 101.50 Q754.50 118.00 746 130.5Z" fill="none" stroke="#f7b478" stroke-width="1" transform="translate(746 97) scale(0.88) translate(-746 -97)" opacity=".8"/><text x="746" y="102.6" font-size="16" class="pn">26</text>
<path d="M756 141.5 Q747.50 129.00 742.80 112.50 A13.8 13.8 0 1 1 769.20 112.50 Q764.50 129.00 756 141.5Z" fill="#ea8a38" stroke="#7a4412" stroke-width="1" stroke-opacity=".75" stroke-linejoin="round"/><path d="M756 141.5 Q747.50 129.00 742.80 112.50 A13.8 13.8 0 1 1 769.20 112.50 Q764.50 129.00 756 141.5Z" fill="none" stroke="#f7b478" stroke-width="1" transform="translate(756 108) scale(0.88) translate(-756 -108)" opacity=".8"/><text x="756" y="113.6" font-size="16" class="pn">25</text>
<path d="M758 153.5 Q749.50 141.00 744.80 124.50 A13.8 13.8 0 1 1 771.20 124.50 Q766.50 141.00 758 153.5Z" fill="#ea8a38" stroke="#7a4412" stroke-width="1" stroke-opacity=".75" stroke-linejoin="round"/><path d="M758 153.5 Q749.50 141.00 744.80 124.50 A13.8 13.8 0 1 1 771.20 124.50 Q766.50 141.00 758 153.5Z" fill="none" stroke="#f7b478" stroke-width="1" transform="translate(758 120) scale(0.88) translate(-758 -120)" opacity=".8"/><text x="758" y="125.6" font-size="16" class="pn">2</text>
<path d="M770 157.5 Q761.50 145.00 756.80 128.50 A13.8 13.8 0 1 1 783.20 128.50 Q778.50 145.00 770 157.5Z" fill="#ea8a38" stroke="#7a4412" stroke-width="1" stroke-opacity=".75" stroke-linejoin="round"/><path d="M770 157.5 Q761.50 145.00 756.80 128.50 A13.8 13.8 0 1 1 783.20 128.50 Q778.50 145.00 770 157.5Z" fill="none" stroke="#f7b478" stroke-width="1" transform="translate(770 124) scale(0.88) translate(-770 -124)" opacity=".8"/><text x="770" y="129.6" font-size="16" class="pn">2</text>
<path d="M741 173.5 Q732.50 161.00 727.80 144.50 A13.8 13.8 0 1 1 754.20 144.50 Q749.50 161.00 741 173.5Z" fill="#ea8a38" stroke="#7a4412" stroke-width="1" stroke-opacity=".75" stroke-linejoin="round"/><path d="M741 173.5 Q732.50 161.00 727.80 144.50 A13.8 13.8 0 1 1 754.20 144.50 Q749.50 161.00 741 173.5Z" fill="none" stroke="#f7b478" stroke-width="1" transform="translate(741 140) scale(0.88) translate(-741 -140)" opacity=".8"/><text x="741" y="145.6" font-size="16" class="pn">2</text>
<path d="M781 170.5 Q772.50 158.00 767.80 141.50 A13.8 13.8 0 1 1 794.20 141.50 Q789.50 158.00 781 170.5Z" fill="#ea8a38" stroke="#7a4412" stroke-width="1" stroke-opacity=".75" stroke-linejoin="round"/><path d="M781 170.5 Q772.50 158.00 767.80 141.50 A13.8 13.8 0 1 1 794.20 141.50 Q789.50 158.00 781 170.5Z" fill="none" stroke="#f7b478" stroke-width="1" transform="translate(781 137) scale(0.88) translate(-781 -137)" opacity=".8"/><text x="781" y="142.6" font-size="16" class="pn">9</text>
<path d="M756 221.5 Q747.50 209.00 742.80 192.50 A13.8 13.8 0 1 1 769.20 192.50 Q764.50 209.00 756 221.5Z" fill="#ea8a38" stroke="#7a4412" stroke-width="1" stroke-opacity=".75" stroke-linejoin="round"/><path d="M756 221.5 Q747.50 209.00 742.80 192.50 A13.8 13.8 0 1 1 769.20 192.50 Q764.50 209.00 756 221.5Z" fill="none" stroke="#f7b478" stroke-width="1" transform="translate(756 188) scale(0.88) translate(-756 -188)" opacity=".8"/><text x="756" y="193.6" font-size="16" class="pn">38</text>
<path d="M731 162.5 Q722.50 150.00 717.80 133.50 A13.8 13.8 0 1 1 744.20 133.50 Q739.50 150.00 731 162.5Z" fill="#d6cf35" stroke="#6f6a10" stroke-width="1" stroke-opacity=".75" stroke-linejoin="round"/><path d="M731 162.5 Q722.50 150.00 717.80 133.50 A13.8 13.8 0 1 1 744.20 133.50 Q739.50 150.00 731 162.5Z" fill="none" stroke="#eeea80" stroke-width="1" transform="translate(731 129) scale(0.88) translate(-731 -129)" opacity=".8"/><text x="731" y="134.6" font-size="16" class="pn">32</text><text x="731" y="146.8" font-size="10.5" class="pm">M</text>
<path d="M798.0 145.8 Q789.50 133.30 784.80 116.80 A13.8 13.8 0 1 1 811.20 116.80 Q806.50 133.30 798.0 145.8Z" fill="#22a02e" stroke="#0c4d12" stroke-width="1" stroke-opacity=".75" stroke-linejoin="round"/><path d="M798.0 145.8 Q789.50 133.30 784.80 116.80 A13.8 13.8 0 1 1 811.20 116.80 Q806.50 133.30 798.0 145.8Z" fill="none" stroke="#5cc864" stroke-width="1" transform="translate(798.0 112.3) scale(0.88) translate(-798.0 -112.3)" opacity=".8"/>
<path d="M797.0 147.2 Q788.50 134.70 783.80 118.20 A13.8 13.8 0 1 1 810.20 118.20 Q805.50 134.70 797.0 147.2Z" fill="#22a02e" stroke="#0c4d12" stroke-width="1" stroke-opacity=".75" stroke-linejoin="round"/><path d="M797.0 147.2 Q788.50 134.70 783.80 118.20 A13.8 13.8 0 1 1 810.20 118.20 Q805.50 134.70 797.0 147.2Z" fill="none" stroke="#5cc864" stroke-width="1" transform="translate(797.0 113.7) scale(0.88) translate(-797.0 -113.7)" opacity=".8"/>
<path d="M826.3 152.6 Q817.80 140.10 813.10 123.60 A13.8 13.8 0 1 1 839.50 123.60 Q834.80 140.10 826.3 152.6Z" fill="#22a02e" stroke="#0c4d12" stroke-width="1" stroke-opacity=".75" stroke-linejoin="round"/><path d="M826.3 152.6 Q817.80 140.10 813.10 123.60 A13.8 13.8 0 1 1 839.50 123.60 Q834.80 140.10 826.3 152.6Z" fill="none" stroke="#5cc864" stroke-width="1" transform="translate(826.3 119.1) scale(0.88) translate(-826.3 -119.1)" opacity=".8"/>
<path d="M792.8 154.6 Q784.30 142.10 779.60 125.60 A13.8 13.8 0 1 1 806.00 125.60 Q801.30 142.10 792.8 154.6Z" fill="#22a02e" stroke="#0c4d12" stroke-width="1" stroke-opacity=".75" stroke-linejoin="round"/><path d="M792.8 154.6 Q784.30 142.10 779.60 125.60 A13.8 13.8 0 1 1 806.00 125.60 Q801.30 142.10 792.8 154.6Z" fill="none" stroke="#5cc864" stroke-width="1" transform="translate(792.8 121.1) scale(0.88) translate(-792.8 -121.1)" opacity=".8"/>
<path d="M810.4 156.1 Q801.90 143.60 797.20 127.10 A13.8 13.8 0 1 1 823.60 127.10 Q818.90 143.60 810.4 156.1Z" fill="#22a02e" stroke="#0c4d12" stroke-width="1" stroke-opacity=".75" stroke-linejoin="round"/><path d="M810.4 156.1 Q801.90 143.60 797.20 127.10 A13.8 13.8 0 1 1 823.60 127.10 Q818.90 143.60 810.4 156.1Z" fill="none" stroke="#5cc864" stroke-width="1" transform="translate(810.4 122.6) scale(0.88) translate(-810.4 -122.6)" opacity=".8"/>
<path d="M807.6 157.1 Q799.10 144.60 794.40 128.10 A13.8 13.8 0 1 1 820.80 128.10 Q816.10 144.60 807.6 157.1Z" fill="#22a02e" stroke="#0c4d12" stroke-width="1" stroke-opacity=".75" stroke-linejoin="round"/><path d="M807.6 157.1 Q799.10 144.60 794.40 128.10 A13.8 13.8 0 1 1 820.80 128.10 Q816.10 144.60 807.6 157.1Z" fill="none" stroke="#5cc864" stroke-width="1" transform="translate(807.6 123.6) scale(0.88) translate(-807.6 -123.6)" opacity=".8"/>
<path d="M801.0 160.5 Q792.50 148.00 787.80 131.50 A13.8 13.8 0 1 1 814.20 131.50 Q809.50 148.00 801.0 160.5Z" fill="#22a02e" stroke="#0c4d12" stroke-width="1" stroke-opacity=".75" stroke-linejoin="round"/><path d="M801.0 160.5 Q792.50 148.00 787.80 131.50 A13.8 13.8 0 1 1 814.20 131.50 Q809.50 148.00 801.0 160.5Z" fill="none" stroke="#5cc864" stroke-width="1" transform="translate(801.0 127.0) scale(0.88) translate(-801.0 -127.0)" opacity=".8"/>
<path d="M813.2 162.4 Q804.70 149.90 800.00 133.40 A13.8 13.8 0 1 1 826.40 133.40 Q821.70 149.90 813.2 162.4Z" fill="#22a02e" stroke="#0c4d12" stroke-width="1" stroke-opacity=".75" stroke-linejoin="round"/><path d="M813.2 162.4 Q804.70 149.90 800.00 133.40 A13.8 13.8 0 1 1 826.40 133.40 Q821.70 149.90 813.2 162.4Z" fill="none" stroke="#5cc864" stroke-width="1" transform="translate(813.2 128.9) scale(0.88) translate(-813.2 -128.9)" opacity=".8"/>
<path d="M817.1 163.2 Q808.60 150.70 803.90 134.20 A13.8 13.8 0 1 1 830.30 134.20 Q825.60 150.70 817.1 163.2Z" fill="#22a02e" stroke="#0c4d12" stroke-width="1" stroke-opacity=".75" stroke-linejoin="round"/><path d="M817.1 163.2 Q808.60 150.70 803.90 134.20 A13.8 13.8 0 1 1 830.30 134.20 Q825.60 150.70 817.1 163.2Z" fill="none" stroke="#5cc864" stroke-width="1" transform="translate(817.1 129.7) scale(0.88) translate(-817.1 -129.7)" opacity=".8"/>
<path d="M808.9 168.8 Q800.40 156.30 795.70 139.80 A13.8 13.8 0 1 1 822.10 139.80 Q817.40 156.30 808.9 168.8Z" fill="#22a02e" stroke="#0c4d12" stroke-width="1" stroke-opacity=".75" stroke-linejoin="round"/><path d="M808.9 168.8 Q800.40 156.30 795.70 139.80 A13.8 13.8 0 1 1 822.10 139.80 Q817.40 156.30 808.9 168.8Z" fill="none" stroke="#5cc864" stroke-width="1" transform="translate(808.9 135.3) scale(0.88) translate(-808.9 -135.3)" opacity=".8"/>
<path d="M821.8 169.0 Q813.30 156.50 808.60 140.00 A13.8 13.8 0 1 1 835.00 140.00 Q830.30 156.50 821.8 169.0Z" fill="#22a02e" stroke="#0c4d12" stroke-width="1" stroke-opacity=".75" stroke-linejoin="round"/><path d="M821.8 169.0 Q813.30 156.50 808.60 140.00 A13.8 13.8 0 1 1 835.00 140.00 Q830.30 156.50 821.8 169.0Z" fill="none" stroke="#5cc864" stroke-width="1" transform="translate(821.8 135.5) scale(0.88) translate(-821.8 -135.5)" opacity=".8"/>
<path d="M793.7 171.5 Q785.20 159.00 780.50 142.50 A13.8 13.8 0 1 1 806.90 142.50 Q802.20 159.00 793.7 171.5Z" fill="#22a02e" stroke="#0c4d12" stroke-width="1" stroke-opacity=".75" stroke-linejoin="round"/><path d="M793.7 171.5 Q785.20 159.00 780.50 142.50 A13.8 13.8 0 1 1 806.90 142.50 Q802.20 159.00 793.7 171.5Z" fill="none" stroke="#5cc864" stroke-width="1" transform="translate(793.7 138.0) scale(0.88) translate(-793.7 -138.0)" opacity=".8"/>
<path d="M809.4 172.7 Q800.90 160.20 796.20 143.70 A13.8 13.8 0 1 1 822.60 143.70 Q817.90 160.20 809.4 172.7Z" fill="#22a02e" stroke="#0c4d12" stroke-width="1" stroke-opacity=".75" stroke-linejoin="round"/><path d="M809.4 172.7 Q800.90 160.20 796.20 143.70 A13.8 13.8 0 1 1 822.60 143.70 Q817.90 160.20 809.4 172.7Z" fill="none" stroke="#5cc864" stroke-width="1" transform="translate(809.4 139.2) scale(0.88) translate(-809.4 -139.2)" opacity=".8"/>
<path d="M789.8 182.5 Q781.30 170.00 776.60 153.50 A13.8 13.8 0 1 1 803.00 153.50 Q798.30 170.00 789.8 182.5Z" fill="#22a02e" stroke="#0c4d12" stroke-width="1" stroke-opacity=".75" stroke-linejoin="round"/><path d="M789.8 182.5 Q781.30 170.00 776.60 153.50 A13.8 13.8 0 1 1 803.00 153.50 Q798.30 170.00 789.8 182.5Z" fill="none" stroke="#5cc864" stroke-width="1" transform="translate(789.8 149.0) scale(0.88) translate(-789.8 -149.0)" opacity=".8"/>
<path d="M838.7 183.8 Q830.20 171.30 825.50 154.80 A13.8 13.8 0 1 1 851.90 154.80 Q847.20 171.30 838.7 183.8Z" fill="#22a02e" stroke="#0c4d12" stroke-width="1" stroke-opacity=".75" stroke-linejoin="round"/><path d="M838.7 183.8 Q830.20 171.30 825.50 154.80 A13.8 13.8 0 1 1 851.90 154.80 Q847.20 171.30 838.7 183.8Z" fill="none" stroke="#5cc864" stroke-width="1" transform="translate(838.7 150.3) scale(0.88) translate(-838.7 -150.3)" opacity=".8"/>
<path d="M807.6 183.8 Q799.10 171.30 794.40 154.80 A13.8 13.8 0 1 1 820.80 154.80 Q816.10 171.30 807.6 183.8Z" fill="#22a02e" stroke="#0c4d12" stroke-width="1" stroke-opacity=".75" stroke-linejoin="round"/><path d="M807.6 183.8 Q799.10 171.30 794.40 154.80 A13.8 13.8 0 1 1 820.80 154.80 Q816.10 171.30 807.6 183.8Z" fill="none" stroke="#5cc864" stroke-width="1" transform="translate(807.6 150.3) scale(0.88) translate(-807.6 -150.3)" opacity=".8"/>
<path d="M821.7 192.0 Q813.20 179.50 808.50 163.00 A13.8 13.8 0 1 1 834.90 163.00 Q830.20 179.50 821.7 192.0Z" fill="#22a02e" stroke="#0c4d12" stroke-width="1" stroke-opacity=".75" stroke-linejoin="round"/><path d="M821.7 192.0 Q813.20 179.50 808.50 163.00 A13.8 13.8 0 1 1 834.90 163.00 Q830.20 179.50 821.7 192.0Z" fill="none" stroke="#5cc864" stroke-width="1" transform="translate(821.7 158.5) scale(0.88) translate(-821.7 -158.5)" opacity=".8"/>
<path d="M810.7 192.4 Q802.20 179.90 797.50 163.40 A13.8 13.8 0 1 1 823.90 163.40 Q819.20 179.90 810.7 192.4Z" fill="#22a02e" stroke="#0c4d12" stroke-width="1" stroke-opacity=".75" stroke-linejoin="round"/><path d="M810.7 192.4 Q802.20 179.90 797.50 163.40 A13.8 13.8 0 1 1 823.90 163.40 Q819.20 179.90 810.7 192.4Z" fill="none" stroke="#5cc864" stroke-width="1" transform="translate(810.7 158.9) scale(0.88) translate(-810.7 -158.9)" opacity=".8"/>
<path d="M806.7 194.6 Q798.20 182.10 793.50 165.60 A13.8 13.8 0 1 1 819.90 165.60 Q815.20 182.10 806.7 194.6Z" fill="#22a02e" stroke="#0c4d12" stroke-width="1" stroke-opacity=".75" stroke-linejoin="round"/><path d="M806.7 194.6 Q798.20 182.10 793.50 165.60 A13.8 13.8 0 1 1 819.90 165.60 Q815.20 182.10 806.7 194.6Z" fill="none" stroke="#5cc864" stroke-width="1" transform="translate(806.7 161.1) scale(0.88) translate(-806.7 -161.1)" opacity=".8"/>
<path d="M846.5 198.6 Q838.00 186.10 833.30 169.60 A13.8 13.8 0 1 1 859.70 169.60 Q855.00 186.10 846.5 198.6Z" fill="#22a02e" stroke="#0c4d12" stroke-width="1" stroke-opacity=".75" stroke-linejoin="round"/><path d="M846.5 198.6 Q838.00 186.10 833.30 169.60 A13.8 13.8 0 1 1 859.70 169.60 Q855.00 186.10 846.5 198.6Z" fill="none" stroke="#5cc864" stroke-width="1" transform="translate(846.5 165.1) scale(0.88) translate(-846.5 -165.1)" opacity=".8"/>
<path d="M821.4 201.1 Q812.90 188.60 808.20 172.10 A13.8 13.8 0 1 1 834.60 172.10 Q829.90 188.60 821.4 201.1Z" fill="#22a02e" stroke="#0c4d12" stroke-width="1" stroke-opacity=".75" stroke-linejoin="round"/><path d="M821.4 201.1 Q812.90 188.60 808.20 172.10 A13.8 13.8 0 1 1 834.60 172.10 Q829.90 188.60 821.4 201.1Z" fill="none" stroke="#5cc864" stroke-width="1" transform="translate(821.4 167.6) scale(0.88) translate(-821.4 -167.6)" opacity=".8"/>
<path d="M826.6 206.8 Q818.10 194.30 813.40 177.80 A13.8 13.8 0 1 1 839.80 177.80 Q835.10 194.30 826.6 206.8Z" fill="#22a02e" stroke="#0c4d12" stroke-width="1" stroke-opacity=".75" stroke-linejoin="round"/><path d="M826.6 206.8 Q818.10 194.30 813.40 177.80 A13.8 13.8 0 1 1 839.80 177.80 Q835.10 194.30 826.6 206.8Z" fill="none" stroke="#5cc864" stroke-width="1" transform="translate(826.6 173.3) scale(0.88) translate(-826.6 -173.3)" opacity=".8"/>
<path d="M794.7 207.4 Q786.20 194.90 781.50 178.40 A13.8 13.8 0 1 1 807.90 178.40 Q803.20 194.90 794.7 207.4Z" fill="#22a02e" stroke="#0c4d12" stroke-width="1" stroke-opacity=".75" stroke-linejoin="round"/><path d="M794.7 207.4 Q786.20 194.90 781.50 178.40 A13.8 13.8 0 1 1 807.90 178.40 Q803.20 194.90 794.7 207.4Z" fill="none" stroke="#5cc864" stroke-width="1" transform="translate(794.7 173.9) scale(0.88) translate(-794.7 -173.9)" opacity=".8"/>
<path d="M800.2 208.0 Q791.70 195.50 787.00 179.00 A13.8 13.8 0 1 1 813.40 179.00 Q808.70 195.50 800.2 208.0Z" fill="#22a02e" stroke="#0c4d12" stroke-width="1" stroke-opacity=".75" stroke-linejoin="round"/><path d="M800.2 208.0 Q791.70 195.50 787.00 179.00 A13.8 13.8 0 1 1 813.40 179.00 Q808.70 195.50 800.2 208.0Z" fill="none" stroke="#5cc864" stroke-width="1" transform="translate(800.2 174.5) scale(0.88) translate(-800.2 -174.5)" opacity=".8"/>
<path d="M820.5 209.8 Q812.00 197.30 807.30 180.80 A13.8 13.8 0 1 1 833.70 180.80 Q829.00 197.30 820.5 209.8Z" fill="#22a02e" stroke="#0c4d12" stroke-width="1" stroke-opacity=".75" stroke-linejoin="round"/><path d="M820.5 209.8 Q812.00 197.30 807.30 180.80 A13.8 13.8 0 1 1 833.70 180.80 Q829.00 197.30 820.5 209.8Z" fill="none" stroke="#5cc864" stroke-width="1" transform="translate(820.5 176.3) scale(0.88) translate(-820.5 -176.3)" opacity=".8"/>
<path d="M834.5 215.8 Q826.00 203.30 821.30 186.80 A13.8 13.8 0 1 1 847.70 186.80 Q843.00 203.30 834.5 215.8Z" fill="#22a02e" stroke="#0c4d12" stroke-width="1" stroke-opacity=".75" stroke-linejoin="round"/><path d="M834.5 215.8 Q826.00 203.30 821.30 186.80 A13.8 13.8 0 1 1 847.70 186.80 Q843.00 203.30 834.5 215.8Z" fill="none" stroke="#5cc864" stroke-width="1" transform="translate(834.5 182.3) scale(0.88) translate(-834.5 -182.3)" opacity=".8"/>
<path d="M837.4 217.2 Q828.90 204.70 824.20 188.20 A13.8 13.8 0 1 1 850.60 188.20 Q845.90 204.70 837.4 217.2Z" fill="#22a02e" stroke="#0c4d12" stroke-width="1" stroke-opacity=".75" stroke-linejoin="round"/><path d="M837.4 217.2 Q828.90 204.70 824.20 188.20 A13.8 13.8 0 1 1 850.60 188.20 Q845.90 204.70 837.4 217.2Z" fill="none" stroke="#5cc864" stroke-width="1" transform="translate(837.4 183.7) scale(0.88) translate(-837.4 -183.7)" opacity=".8"/>
<path d="M848.9 218.3 Q840.40 205.80 835.70 189.30 A13.8 13.8 0 1 1 862.10 189.30 Q857.40 205.80 848.9 218.3Z" fill="#22a02e" stroke="#0c4d12" stroke-width="1" stroke-opacity=".75" stroke-linejoin="round"/><path d="M848.9 218.3 Q840.40 205.80 835.70 189.30 A13.8 13.8 0 1 1 862.10 189.30 Q857.40 205.80 848.9 218.3Z" fill="none" stroke="#5cc864" stroke-width="1" transform="translate(848.9 184.8) scale(0.88) translate(-848.9 -184.8)" opacity=".8"/>
<path d="M805.3 222.1 Q796.80 209.60 792.10 193.10 A13.8 13.8 0 1 1 818.50 193.10 Q813.80 209.60 805.3 222.1Z" fill="#22a02e" stroke="#0c4d12" stroke-width="1" stroke-opacity=".75" stroke-linejoin="round"/><path d="M805.3 222.1 Q796.80 209.60 792.10 193.10 A13.8 13.8 0 1 1 818.50 193.10 Q813.80 209.60 805.3 222.1Z" fill="none" stroke="#5cc864" stroke-width="1" transform="translate(805.3 188.6) scale(0.88) translate(-805.3 -188.6)" opacity=".8"/>
<path d="M825.9 222.3 Q817.40 209.80 812.70 193.30 A13.8 13.8 0 1 1 839.10 193.30 Q834.40 209.80 825.9 222.3Z" fill="#22a02e" stroke="#0c4d12" stroke-width="1" stroke-opacity=".75" stroke-linejoin="round"/><path d="M825.9 222.3 Q817.40 209.80 812.70 193.30 A13.8 13.8 0 1 1 839.10 193.30 Q834.40 209.80 825.9 222.3Z" fill="none" stroke="#5cc864" stroke-width="1" transform="translate(825.9 188.8) scale(0.88) translate(-825.9 -188.8)" opacity=".8"/>
<path d="M833.9 222.7 Q825.40 210.20 820.70 193.70 A13.8 13.8 0 1 1 847.10 193.70 Q842.40 210.20 833.9 222.7Z" fill="#22a02e" stroke="#0c4d12" stroke-width="1" stroke-opacity=".75" stroke-linejoin="round"/><path d="M833.9 222.7 Q825.40 210.20 820.70 193.70 A13.8 13.8 0 1 1 847.10 193.70 Q842.40 210.20 833.9 222.7Z" fill="none" stroke="#5cc864" stroke-width="1" transform="translate(833.9 189.2) scale(0.88) translate(-833.9 -189.2)" opacity=".8"/>
<path d="M809.1 222.8 Q800.60 210.30 795.90 193.80 A13.8 13.8 0 1 1 822.30 193.80 Q817.60 210.30 809.1 222.8Z" fill="#22a02e" stroke="#0c4d12" stroke-width="1" stroke-opacity=".75" stroke-linejoin="round"/><path d="M809.1 222.8 Q800.60 210.30 795.90 193.80 A13.8 13.8 0 1 1 822.30 193.80 Q817.60 210.30 809.1 222.8Z" fill="none" stroke="#5cc864" stroke-width="1" transform="translate(809.1 189.3) scale(0.88) translate(-809.1 -189.3)" opacity=".8"/>
<path d="M800.7 224.3 Q792.20 211.80 787.50 195.30 A13.8 13.8 0 1 1 813.90 195.30 Q809.20 211.80 800.7 224.3Z" fill="#22a02e" stroke="#0c4d12" stroke-width="1" stroke-opacity=".75" stroke-linejoin="round"/><path d="M800.7 224.3 Q792.20 211.80 787.50 195.30 A13.8 13.8 0 1 1 813.90 195.30 Q809.20 211.80 800.7 224.3Z" fill="none" stroke="#5cc864" stroke-width="1" transform="translate(800.7 190.8) scale(0.88) translate(-800.7 -190.8)" opacity=".8"/>
<path d="M837.3 224.4 Q828.80 211.90 824.10 195.40 A13.8 13.8 0 1 1 850.50 195.40 Q845.80 211.90 837.3 224.4Z" fill="#22a02e" stroke="#0c4d12" stroke-width="1" stroke-opacity=".75" stroke-linejoin="round"/><path d="M837.3 224.4 Q828.80 211.90 824.10 195.40 A13.8 13.8 0 1 1 850.50 195.40 Q845.80 211.90 837.3 224.4Z" fill="none" stroke="#5cc864" stroke-width="1" transform="translate(837.3 190.9) scale(0.88) translate(-837.3 -190.9)" opacity=".8"/>
<path d="M799.2 225.6 Q790.70 213.10 786.00 196.60 A13.8 13.8 0 1 1 812.40 196.60 Q807.70 213.10 799.2 225.6Z" fill="#22a02e" stroke="#0c4d12" stroke-width="1" stroke-opacity=".75" stroke-linejoin="round"/><path d="M799.2 225.6 Q790.70 213.10 786.00 196.60 A13.8 13.8 0 1 1 812.40 196.60 Q807.70 213.10 799.2 225.6Z" fill="none" stroke="#5cc864" stroke-width="1" transform="translate(799.2 192.1) scale(0.88) translate(-799.2 -192.1)" opacity=".8"/>
<path d="M805.9 226.1 Q797.40 213.60 792.70 197.10 A13.8 13.8 0 1 1 819.10 197.10 Q814.40 213.60 805.9 226.1Z" fill="#22a02e" stroke="#0c4d12" stroke-width="1" stroke-opacity=".75" stroke-linejoin="round"/><path d="M805.9 226.1 Q797.40 213.60 792.70 197.10 A13.8 13.8 0 1 1 819.10 197.10 Q814.40 213.60 805.9 226.1Z" fill="none" stroke="#5cc864" stroke-width="1" transform="translate(805.9 192.6) scale(0.88) translate(-805.9 -192.6)" opacity=".8"/>
<path d="M801 160.5 Q792.50 148.00 787.80 131.50 A13.8 13.8 0 1 1 814.20 131.50 Q809.50 148.00 801 160.5Z" fill="#22a02e" stroke="#0c4d12" stroke-width="1" stroke-opacity=".75" stroke-linejoin="round"/><path d="M801 160.5 Q792.50 148.00 787.80 131.50 A13.8 13.8 0 1 1 814.20 131.50 Q809.50 148.00 801 160.5Z" fill="none" stroke="#5cc864" stroke-width="1" transform="translate(801 127) scale(0.88) translate(-801 -127)" opacity=".8"/><text x="801" y="132.6" font-size="16" class="pn">28</text>
<path d="M809 221.5 Q800.50 209.00 795.80 192.50 A13.8 13.8 0 1 1 822.20 192.50 Q817.50 209.00 809 221.5Z" fill="#e0482f" stroke="#7a2010" stroke-width="1" stroke-opacity=".75" stroke-linejoin="round"/><path d="M809 221.5 Q800.50 209.00 795.80 192.50 A13.8 13.8 0 1 1 822.20 192.50 Q817.50 209.00 809 221.5Z" fill="none" stroke="#f3826a" stroke-width="1" transform="translate(809 188) scale(0.88) translate(-809 -188)" opacity=".8"/>
<path d="M824 219.5 Q815.50 207.00 810.80 190.50 A13.8 13.8 0 1 1 837.20 190.50 Q832.50 207.00 824 219.5Z" fill="#22a02e" stroke="#0c4d12" stroke-width="1" stroke-opacity=".75" stroke-linejoin="round"/><path d="M824 219.5 Q815.50 207.00 810.80 190.50 A13.8 13.8 0 1 1 837.20 190.50 Q832.50 207.00 824 219.5Z" fill="none" stroke="#5cc864" stroke-width="1" transform="translate(824 186) scale(0.88) translate(-824 -186)" opacity=".8"/><text x="824" y="191.6" font-size="16" class="pn">27</text>
<path d="M835 219.5 Q826.50 207.00 821.80 190.50 A13.8 13.8 0 1 1 848.20 190.50 Q843.50 207.00 835 219.5Z" fill="#22a02e" stroke="#0c4d12" stroke-width="1" stroke-opacity=".75" stroke-linejoin="round"/><path d="M835 219.5 Q826.50 207.00 821.80 190.50 A13.8 13.8 0 1 1 848.20 190.50 Q843.50 207.00 835 219.5Z" fill="none" stroke="#5cc864" stroke-width="1" transform="translate(835 186) scale(0.88) translate(-835 -186)" opacity=".8"/><text x="835" y="191.6" font-size="16" class="pn">9</text>
<path d="M760 241.5 Q751.50 229.00 746.80 212.50 A13.8 13.8 0 1 1 773.20 212.50 Q768.50 229.00 760 241.5Z" fill="#22a02e" stroke="#0c4d12" stroke-width="1" stroke-opacity=".75" stroke-linejoin="round"/><path d="M760 241.5 Q751.50 229.00 746.80 212.50 A13.8 13.8 0 1 1 773.20 212.50 Q768.50 229.00 760 241.5Z" fill="none" stroke="#5cc864" stroke-width="1" transform="translate(760 208) scale(0.88) translate(-760 -208)" opacity=".8"/><text x="760" y="213.6" font-size="16" class="pn">32</text><text x="760" y="225.8" font-size="10.5" class="pm">M</text>
<path d="M780 235.5 Q771.50 223.00 766.80 206.50 A13.8 13.8 0 1 1 793.20 206.50 Q788.50 223.00 780 235.5Z" fill="#22a02e" stroke="#0c4d12" stroke-width="1" stroke-opacity=".75" stroke-linejoin="round"/><path d="M780 235.5 Q771.50 223.00 766.80 206.50 A13.8 13.8 0 1 1 793.20 206.50 Q788.50 223.00 780 235.5Z" fill="none" stroke="#5cc864" stroke-width="1" transform="translate(780 202) scale(0.88) translate(-780 -202)" opacity=".8"/><text x="780" y="207.6" font-size="16" class="pn">3</text><text x="780" y="219.8" font-size="10.5" class="pm">M</text>
<path d="M794 242.5 Q785.50 230.00 780.80 213.50 A13.8 13.8 0 1 1 807.20 213.50 Q802.50 230.00 794 242.5Z" fill="#22a02e" stroke="#0c4d12" stroke-width="1" stroke-opacity=".75" stroke-linejoin="round"/><path d="M794 242.5 Q785.50 230.00 780.80 213.50 A13.8 13.8 0 1 1 807.20 213.50 Q802.50 230.00 794 242.5Z" fill="none" stroke="#5cc864" stroke-width="1" transform="translate(794 209) scale(0.88) translate(-794 -209)" opacity=".8"/><text x="794" y="214.6" font-size="16" class="pn">34</text><text x="794" y="226.8" font-size="10.5" class="pm">M</text>
<path d="M815 240.5 Q806.50 228.00 801.80 211.50 A13.8 13.8 0 1 1 828.20 211.50 Q823.50 228.00 815 240.5Z" fill="#e0482f" stroke="#7a2010" stroke-width="1" stroke-opacity=".75" stroke-linejoin="round"/><path d="M815 240.5 Q806.50 228.00 801.80 211.50 A13.8 13.8 0 1 1 828.20 211.50 Q823.50 228.00 815 240.5Z" fill="none" stroke="#f3826a" stroke-width="1" transform="translate(815 207) scale(0.88) translate(-815 -207)" opacity=".8"/><text x="815" y="212.6" font-size="16" class="pn">28</text><text x="815" y="224.8" font-size="10.5" class="pm">M</text>
<path d="M833 239.5 Q824.50 227.00 819.80 210.50 A13.8 13.8 0 1 1 846.20 210.50 Q841.50 227.00 833 239.5Z" fill="#22a02e" stroke="#0c4d12" stroke-width="1" stroke-opacity=".75" stroke-linejoin="round"/><path d="M833 239.5 Q824.50 227.00 819.80 210.50 A13.8 13.8 0 1 1 846.20 210.50 Q841.50 227.00 833 239.5Z" fill="none" stroke="#5cc864" stroke-width="1" transform="translate(833 206) scale(0.88) translate(-833 -206)" opacity=".8"/><text x="833" y="211.6" font-size="16" class="pn">25</text>
<path d="M851 224.5 Q842.50 212.00 837.80 195.50 A13.8 13.8 0 1 1 864.20 195.50 Q859.50 212.00 851 224.5Z" fill="#22a02e" stroke="#0c4d12" stroke-width="1" stroke-opacity=".75" stroke-linejoin="round"/><path d="M851 224.5 Q842.50 212.00 837.80 195.50 A13.8 13.8 0 1 1 864.20 195.50 Q859.50 212.00 851 224.5Z" fill="none" stroke="#5cc864" stroke-width="1" transform="translate(851 191) scale(0.88) translate(-851 -191)" opacity=".8"/><text x="851" y="196.6" font-size="16" class="pn">19</text><text x="851" y="208.8" font-size="10.5" class="pm">M</text>
<path d="M815 268.5 Q806.50 256.00 801.80 239.50 A13.8 13.8 0 1 1 828.20 239.50 Q823.50 256.00 815 268.5Z" fill="#e0482f" stroke="#7a2010" stroke-width="1" stroke-opacity=".75" stroke-linejoin="round"/><path d="M815 268.5 Q806.50 256.00 801.80 239.50 A13.8 13.8 0 1 1 828.20 239.50 Q823.50 256.00 815 268.5Z" fill="none" stroke="#f3826a" stroke-width="1" transform="translate(815 235) scale(0.88) translate(-815 -235)" opacity=".8"/>
<path d="M805 275.5 Q796.50 263.00 791.80 246.50 A13.8 13.8 0 1 1 818.20 246.50 Q813.50 263.00 805 275.5Z" fill="#e0482f" stroke="#7a2010" stroke-width="1" stroke-opacity=".75" stroke-linejoin="round"/><path d="M805 275.5 Q796.50 263.00 791.80 246.50 A13.8 13.8 0 1 1 818.20 246.50 Q813.50 263.00 805 275.5Z" fill="none" stroke="#f3826a" stroke-width="1" transform="translate(805 242) scale(0.88) translate(-805 -242)" opacity=".8"/>
<path d="M790 285.5 Q781.50 273.00 776.80 256.50 A13.8 13.8 0 1 1 803.20 256.50 Q798.50 273.00 790 285.5Z" fill="#e0482f" stroke="#7a2010" stroke-width="1" stroke-opacity=".75" stroke-linejoin="round"/><path d="M790 285.5 Q781.50 273.00 776.80 256.50 A13.8 13.8 0 1 1 803.20 256.50 Q798.50 273.00 790 285.5Z" fill="none" stroke="#f3826a" stroke-width="1" transform="translate(790 252) scale(0.88) translate(-790 -252)" opacity=".8"/>
<path d="M822 288.5 Q813.50 276.00 808.80 259.50 A13.8 13.8 0 1 1 835.20 259.50 Q830.50 276.00 822 288.5Z" fill="#e0482f" stroke="#7a2010" stroke-width="1" stroke-opacity=".75" stroke-linejoin="round"/><path d="M822 288.5 Q813.50 276.00 808.80 259.50 A13.8 13.8 0 1 1 835.20 259.50 Q830.50 276.00 822 288.5Z" fill="none" stroke="#f3826a" stroke-width="1" transform="translate(822 255) scale(0.88) translate(-822 -255)" opacity=".8"/>
<path d="M826 298.5 Q817.50 286.00 812.80 269.50 A13.8 13.8 0 1 1 839.20 269.50 Q834.50 286.00 826 298.5Z" fill="#e0482f" stroke="#7a2010" stroke-width="1" stroke-opacity=".75" stroke-linejoin="round"/><path d="M826 298.5 Q817.50 286.00 812.80 269.50 A13.8 13.8 0 1 1 839.20 269.50 Q834.50 286.00 826 298.5Z" fill="none" stroke="#f3826a" stroke-width="1" transform="translate(826 265) scale(0.88) translate(-826 -265)" opacity=".8"/>
<path d="M810 303.5 Q801.50 291.00 796.80 274.50 A13.8 13.8 0 1 1 823.20 274.50 Q818.50 291.00 810 303.5Z" fill="#e0482f" stroke="#7a2010" stroke-width="1" stroke-opacity=".75" stroke-linejoin="round"/><path d="M810 303.5 Q801.50 291.00 796.80 274.50 A13.8 13.8 0 1 1 823.20 274.50 Q818.50 291.00 810 303.5Z" fill="none" stroke="#f3826a" stroke-width="1" transform="translate(810 270) scale(0.88) translate(-810 -270)" opacity=".8"/>
<path d="M798 308.5 Q789.50 296.00 784.80 279.50 A13.8 13.8 0 1 1 811.20 279.50 Q806.50 296.00 798 308.5Z" fill="#e0482f" stroke="#7a2010" stroke-width="1" stroke-opacity=".75" stroke-linejoin="round"/><path d="M798 308.5 Q789.50 296.00 784.80 279.50 A13.8 13.8 0 1 1 811.20 279.50 Q806.50 296.00 798 308.5Z" fill="none" stroke="#f3826a" stroke-width="1" transform="translate(798 275) scale(0.88) translate(-798 -275)" opacity=".8"/>
<path d="M818 313.5 Q809.50 301.00 804.80 284.50 A13.8 13.8 0 1 1 831.20 284.50 Q826.50 301.00 818 313.5Z" fill="#e0482f" stroke="#7a2010" stroke-width="1" stroke-opacity=".75" stroke-linejoin="round"/><path d="M818 313.5 Q809.50 301.00 804.80 284.50 A13.8 13.8 0 1 1 831.20 284.50 Q826.50 301.00 818 313.5Z" fill="none" stroke="#f3826a" stroke-width="1" transform="translate(818 280) scale(0.88) translate(-818 -280)" opacity=".8"/>
<path d="M790 285.5 Q781.50 273.00 776.80 256.50 A13.8 13.8 0 1 1 803.20 256.50 Q798.50 273.00 790 285.5Z" fill="#e0482f" stroke="#7a2010" stroke-width="1" stroke-opacity=".75" stroke-linejoin="round"/><path d="M790 285.5 Q781.50 273.00 776.80 256.50 A13.8 13.8 0 1 1 803.20 256.50 Q798.50 273.00 790 285.5Z" fill="none" stroke="#f3826a" stroke-width="1" transform="translate(790 252) scale(0.88) translate(-790 -252)" opacity=".8"/><text x="790" y="257.6" font-size="16" class="pn">2</text>
<path d="M840 259.5 Q831.50 247.00 826.80 230.50 A13.8 13.8 0 1 1 853.20 230.50 Q848.50 247.00 840 259.5Z" fill="#22a02e" stroke="#0c4d12" stroke-width="1" stroke-opacity=".75" stroke-linejoin="round"/><path d="M840 259.5 Q831.50 247.00 826.80 230.50 A13.8 13.8 0 1 1 853.20 230.50 Q848.50 247.00 840 259.5Z" fill="none" stroke="#5cc864" stroke-width="1" transform="translate(840 226) scale(0.88) translate(-840 -226)" opacity=".8"/>
<path d="M840 269.5 Q831.50 257.00 826.80 240.50 A13.8 13.8 0 1 1 853.20 240.50 Q848.50 257.00 840 269.5Z" fill="#22a02e" stroke="#0c4d12" stroke-width="1" stroke-opacity=".75" stroke-linejoin="round"/><path d="M840 269.5 Q831.50 257.00 826.80 240.50 A13.8 13.8 0 1 1 853.20 240.50 Q848.50 257.00 840 269.5Z" fill="none" stroke="#5cc864" stroke-width="1" transform="translate(840 236) scale(0.88) translate(-840 -236)" opacity=".8"/>
<path d="M840 276.5 Q831.50 264.00 826.80 247.50 A13.8 13.8 0 1 1 853.20 247.50 Q848.50 264.00 840 276.5Z" fill="#22a02e" stroke="#0c4d12" stroke-width="1" stroke-opacity=".75" stroke-linejoin="round"/><path d="M840 276.5 Q831.50 264.00 826.80 247.50 A13.8 13.8 0 1 1 853.20 247.50 Q848.50 264.00 840 276.5Z" fill="none" stroke="#5cc864" stroke-width="1" transform="translate(840 243) scale(0.88) translate(-840 -243)" opacity=".8"/><text x="840" y="248.6" font-size="16" class="pn">9</text><text x="840" y="260.8" font-size="10.5" class="pm">M</text>
<path d="M963 205.5 Q954.50 193.00 949.80 176.50 A13.8 13.8 0 1 1 976.20 176.50 Q971.50 193.00 963 205.5Z" fill="#22a02e" stroke="#0c4d12" stroke-width="1" stroke-opacity=".75" stroke-linejoin="round"/><path d="M963 205.5 Q954.50 193.00 949.80 176.50 A13.8 13.8 0 1 1 976.20 176.50 Q971.50 193.00 963 205.5Z" fill="none" stroke="#5cc864" stroke-width="1" transform="translate(963 172) scale(0.88) translate(-963 -172)" opacity=".8"/><text x="963" y="177.6" font-size="16" class="pn">18</text><text x="963" y="189.8" font-size="10.5" class="pm">M</text>
<path d="M984 208.5 Q975.50 196.00 970.80 179.50 A13.8 13.8 0 1 1 997.20 179.50 Q992.50 196.00 984 208.5Z" fill="#22a02e" stroke="#0c4d12" stroke-width="1" stroke-opacity=".75" stroke-linejoin="round"/><path d="M984 208.5 Q975.50 196.00 970.80 179.50 A13.8 13.8 0 1 1 997.20 179.50 Q992.50 196.00 984 208.5Z" fill="none" stroke="#5cc864" stroke-width="1" transform="translate(984 175) scale(0.88) translate(-984 -175)" opacity=".8"/><text x="984" y="180.6" font-size="16" class="pn">15</text><text x="984" y="192.8" font-size="10.5" class="pm">M</text>
<path d="M1005 237.5 Q996.50 225.00 991.80 208.50 A13.8 13.8 0 1 1 1018.20 208.50 Q1013.50 225.00 1005 237.5Z" fill="#22a02e" stroke="#0c4d12" stroke-width="1" stroke-opacity=".75" stroke-linejoin="round"/><path d="M1005 237.5 Q996.50 225.00 991.80 208.50 A13.8 13.8 0 1 1 1018.20 208.50 Q1013.50 225.00 1005 237.5Z" fill="none" stroke="#5cc864" stroke-width="1" transform="translate(1005 204) scale(0.88) translate(-1005 -204)" opacity=".8"/><text x="1005" y="209.6" font-size="16" class="pn">13</text><text x="1005" y="221.8" font-size="10.5" class="pm">M</text>
<text x="697" y="109" font-size="15" fill="#2a2a2a" stroke="#f6f6f0" stroke-width="2.5" paint-order="stroke">Bo</text>
</svg>
</div>
<div class="abs mc" style="left:372px;top:54px;width:35px;height:69px">
  <div class="abs" style="left:0;top:34px;width:33px;height:1px;background:#ccd"></div>
  <svg class="abs" style="left:9px;top:9px" width="15" height="15" viewBox="0 0 15 15"><path d="M7.5 1v13M1 7.5h13" stroke="#111" stroke-width="2.6"/></svg>
  <svg class="abs" style="left:9px;top:44px" width="15" height="15" viewBox="0 0 15 15"><path d="M1 7.5h13" stroke="#111" stroke-width="2.6"/></svg>
</div>
<div class="abs mc" style="left:372px;top:134px;width:35px;height:71px">
  <div class="abs" style="left:0;top:34px;width:33px;height:2px;background:#cfd4c9"></div>
  <svg class="abs" style="left:9px;top:9px" width="16" height="16" viewBox="0 0 16 16"><path d="M8 1.5L14.5 6 12.5 14H3.5L1.5 6Z" fill="#111"/></svg>
  <svg class="abs" style="left:10px;top:46px" width="14" height="14" viewBox="0 0 14 14"><rect x="1" y="1" width="12" height="12" fill="#111"/></svg>
</div>
<div class="abs" style="left:373px;top:244px;width:86px;height:25px;background:rgba(255,255,255,.55);border:2px solid #222;border-top:none">
  <span class="abs" style="left:6px;top:4px;font-size:12.5px;color:#222">20 mi</span>
</div>
<div class="abs mc" style="left:1507px;top:54px;width:49px;height:48px;border-radius:7px">
  <svg class="abs" style="left:8px;top:9px" width="32" height="30" viewBox="0 0 32 30"><path d="M16 14L31 21 16 28 1 21Z" fill="#6d6d6d"/><path d="M16 9L31 16 16 23 1 16Z" fill="#8a8a8a" stroke="#c9c9c9" stroke-width=".8"/><path d="M16 3L31 10 16 17 1 10Z" fill="#a8a8a8" stroke="#d8d8d8" stroke-width=".8"/></svg>
</div>
<div class="abs" style="left:1528px;top:243px;width:26px;height:26px;border-radius:50%;background:rgba(255,255,255,.6)">
  <svg class="abs" style="left:4px;top:4px" width="18" height="18" viewBox="0 0 18 18"><circle cx="9" cy="9" r="8.5" fill="#111"/><circle cx="9" cy="4.8" r="1.5" fill="#fff"/><path d="M7 7.6h3v6.2h1.2v1.2H6.8v-1.2H8V8.8H7z" fill="#fff"/></svg>
</div>

<div class="abs ibtn" style="left:1234.4px;top:341px;width:37px;height:37px"><svg class="abs" style="left:-2px;top:-2px" width="37" height="37" viewBox="0 0 37 37"><path d="M26.8 21.3A8.6 8.6 0 1 1 23.8 12.3" fill="none" stroke="#0a0f18" stroke-width="2.5"/><path d="M27.6 8.6L27.9 15.6 21.2 14.6Z" fill="#0a0f18"/></svg></div>
<div class="abs ibtn act" style="left:1276.4px;top:341px;width:37px;height:37px"><svg class="abs" style="left:-2px;top:-2px" width="37" height="37" viewBox="0 0 37 37"><path d="M12.9 16V12.9A5.7 5.7 0 0 1 24.3 12.9V16" fill="none" stroke="#0a0f18" stroke-width="2.6"/><rect x="9" y="15.2" width="19.3" height="13.8" rx="1.6" fill="#0a0f18"/><circle cx="18.6" cy="22" r="2.6" fill="#c4ccd4"/></svg></div>
<div class="abs ibtn act" style="left:1318.4px;top:341px;width:37px;height:37px"><svg class="abs" style="left:-2px;top:-2px" width="37" height="37" viewBox="0 0 37 37"><path d="M10.8 7.6H26.3A1.5 1.5 0 0 1 27.8 9.1V22.5A1.5 1.5 0 0 1 26.3 24H21.2L18.6 28.5 16 24H10.8A1.5 1.5 0 0 1 9.3 22.5V9.1A1.5 1.5 0 0 1 10.8 7.6Z" fill="#0a0f18"/><path d="M18.6 11.6l1.2 2.6 2.8.3-2.1 1.9.6 2.7-2.5-1.4-2.5 1.4.6-2.7-2.1-1.9 2.8-.3z" fill="#c4ccd4"/></svg></div>
<div class="abs ibtn act" style="left:1360.4px;top:341px;width:37px;height:37px"><svg class="abs" style="left:-2px;top:-2px" width="37" height="37" viewBox="0 0 37 37"><path d="M18.6 29.6C12.6 22.6 10.6 19.6 10.6 16.3A8 8 0 0 1 26.6 16.3C26.6 19.6 24.6 22.6 18.6 29.6Z" fill="#0a0f18"/><circle cx="18.6" cy="16" r="2.7" fill="#c4ccd4"/></svg></div>
<div class="abs ibtn act" style="left:1402.4px;top:341px;width:37px;height:37px"><svg class="abs" style="left:-2px;top:-2px" width="37" height="37" viewBox="0 0 37 37"><path d="M24.3 20.5C21.2 17.4 19.9 15.9 19.9 13.3A5.1 5.1 0 0 1 30.1 13.3C30.1 15.9 28.6 17.6 24.3 20.5Z" fill="#0a0f18"/><circle cx="25" cy="12.7" r="1.7" fill="#c4ccd4"/><path d="M12 30.5C8.6 27.3 6.5 25.2 6.5 22.6A5.1 5.1 0 0 1 16.7 22.6C16.7 25.4 15.1 27.5 12 30.5Z" fill="#0a0f18"/><circle cx="11.6" cy="22" r="1.7" fill="#c4ccd4"/><path d="M12 30C18 30.5 21 29.5 21.3 25.5S22.5 21 24.3 20" fill="none" stroke="#0a0f18" stroke-width="1.8"/></svg></div>
<div class="abs ibtn" style="left:1444.4px;top:341px;width:37px;height:37px"><svg class="abs" style="left:-2px;top:-2px" width="37" height="37" viewBox="0 0 37 37"><circle cx="9.1" cy="8" r="3" fill="none" stroke="#0a0f18" stroke-width="2.2"/><circle cx="27.6" cy="13.8" r="3" fill="none" stroke="#0a0f18" stroke-width="2.2"/><circle cx="9.9" cy="25.8" r="3" fill="none" stroke="#0a0f18" stroke-width="2.2"/><path d="M7.5 10.5L11 14.5 25.8 19.3 27.5 16.8M25.8 19.3L10 31.3 8.2 28.3" fill="none" stroke="#0a0f18" stroke-width="2" stroke-linejoin="round"/></svg></div>
<div class="abs ibtn act" style="left:1486.4px;top:341px;width:37px;height:37px"><svg class="abs" style="left:-2px;top:-2px" width="37" height="37" viewBox="0 0 37 37"><circle cx="18.2" cy="18.2" r="10" fill="none" stroke="#0a0f18" stroke-width="2.6"/><path d="M9 15.5c1.8-.6 3.4.3 4.6 1.2 1.2.9 2.6.5 3.6 1.6.9 1-.1 2.2-.6 3.3-.5 1.1-.2 2.4-.8 3.6-.9.5-1.7-1.1-2-2.2-.3-1.2-1.4-1.8-2.3-2.5-1-.8-2.1-2-2.5-5zM17 8.6c1 .9 2.3 1.4 3.2.6.8-.6 2-.4 2.4.5-.9.9-2.3 1-2.4 2.1 0 .9 1.2 1.2 2.1 1.1 1.1 0 2-.6 3.1-.2.9.4.8 1.6.1 2.2-.8.8-2 .8-2.2 2 1 .8 2.6.5 3.6 1.2l.9-4.8-2.6-3.8z" fill="#0a0f18"/></svg></div>
<div class="abs ibtn" style="left:1528.4px;top:341px;width:37px;height:37px"><svg class="abs" style="left:-2px;top:-2px" width="37" height="37" viewBox="0 0 37 37"><rect x="9.3" y="9.5" width="18" height="18" rx="1.8" fill="none" stroke="#0a0f18" stroke-width="2.3"/><rect x="8.2" y="8.4" width="7.6" height="20.1" rx="1.5" fill="#0a0f18"/></svg></div>
<div class="abs" style="left:362px;top:383px;width:1204px;height:37px;background:#d8e2e8"></div>
<div class="abs stab" style="left:368px;top:388px;width:186px">Orders</div>
<div class="abs stab" style="left:556px;top:388px;width:187px">Routes</div>
<div class="abs stab" style="left:934px;top:389px;width:186px">Calendar</div>

<div id="overlay"></div>
<div id="tlw">
<div class="abs" style="left:744px;top:386px;width:189px;height:36px;background:#fff;border-radius:6px 6px 0 0;border:1.5px solid #d6dee5;border-bottom:none"><span class="abs" style="left:0;width:186px;top:10.5px;text-align:center;font-size:14px;font-weight:bold;color:#111">Timeline</span></div>
<div class="abs" style="left:364px;top:419px;width:1202px;height:360px;background:#fff"></div>
<div class="abs" style="left:364px;top:455px;width:1202px;height:1px;background:#e6ebef"></div>
<span class="abs" style="left:379px;top:430px;font-size:14px;color:#111">Zoom:</span>
<div class="abs" style="left:438px;top:436px;width:116px;height:6px;border-radius:3px;background:#c9d3dc"></div>
<div class="abs" style="left:438px;top:436px;width:55px;height:6px;border-radius:3px 0 0 3px;background:#62809d"></div>
<div class="abs" style="left:489px;top:430px;width:14px;height:18px;border-radius:3px;background:#62809d;border:1px solid #4e6a85"><div class="abs" style="left:5px;top:4px;width:2px;height:9px;background:#fff"></div></div>
<div class="abs tbtn" style="left:556px;top:427px;width:76px;height:25px"><svg class="abs" style="left:4px;top:4px" width="17" height="16" viewBox="0 0 17 16"><rect x="4" y="0.5" width="9" height="4" fill="#1a7de8"/><rect x="0.5" y="4.5" width="16" height="7" rx="2" fill="#1a7de8"/><rect x="4" y="9" width="9" height="6.5" fill="#fff" stroke="#1a7de8" stroke-width="1.6"/></svg><span class="abs" style="left:26px;top:3px">Print...</span></div>
<div class="abs tbtn" style="left:646px;top:427px;width:83px;height:25px"><svg class="abs" style="left:3px;top:3px" width="18" height="18" viewBox="0 0 24 24"><path fill="none" stroke="#1a7de8" stroke-width="2" d="M10.3 2.5h3.4l.6 2.8 1.9.8 2.4-1.6 2.4 2.4-1.6 2.4.8 1.9 2.8.6v3.4l-2.8.6-.8 1.9 1.6 2.4-2.4 2.4-2.4-1.6-1.9.8-.6 2.8h-3.4l-.6-2.8-1.9-.8-2.4 1.6-2.4-2.4 1.6-2.4-.8-1.9-2.8-.6v-3.4l2.8-.6.8-1.9-1.6-2.4 2.4-2.4 2.4 1.6 1.9-.8z"/><circle cx="12" cy="12" r="3.2" fill="none" stroke="#1a7de8" stroke-width="2"/></svg><span class="abs" style="left:26px;top:3px">Options</span></div>
<div class="abs tbtn" style="left:734px;top:427px;width:111px;height:25px"><svg class="abs" style="left:5px;top:4px" width="15" height="16" viewBox="0 0 15 16"><path d="M3 11.5L11 3.5l2 2-8 8H3z" fill="none" stroke="#1a7de8" stroke-width="1.6"/><path d="M1 15h12" stroke="#1a7de8" stroke-width="1.6"/></svg><span class="abs" style="left:26px;top:3px">Edit timeline</span></div>
<span class="abs" style="left:375px;top:506px;font-size:13.5px;font-weight:bold;color:#111">Driver</span>
<div class="abs" style="left:501px;top:497px;width:108px;height:25px;border-radius:5px;background:#e2e8ec"><span class="abs" style="left:6px;top:5px;font-size:13.5px;font-weight:bold;color:#111;white-space:nowrap">Volume [m3]</span><div class="abs" style="left:89px;top:0;width:1px;height:25px;background:#d3dae0"></div><svg class="abs" style="left:94px;top:9px" width="11" height="8" viewBox="0 0 11 8"><path d="M0 0h11L5.5 8z" fill="#1a7de8"/></svg></div>
<div class="abs" style="left:620px;top:490px;width:946px;height:1px;background:#e3e6e8"></div>
<span class="abs" style="left:618px;top:464px;font-size:14px;color:#111">y</span>
<span class="abs" style="left:622.5px;top:503px;font-size:14px;color:#111">05:30</span>
<div class="abs" style="left:685.4px;top:491px;width:1px;height:35px;background:#e3e6e8"></div>
<span class="abs" style="left:688.9px;top:503px;font-size:14px;color:#111">05:45</span>
<div class="abs" style="left:751.8px;top:491px;width:1px;height:35px;background:#e3e6e8"></div>
<span class="abs" style="left:755.3px;top:503px;font-size:14px;color:#111">06:00</span>
<div class="abs" style="left:818.2px;top:491px;width:1px;height:35px;background:#e3e6e8"></div>
<span class="abs" style="left:821.7px;top:503px;font-size:14px;color:#111">06:15</span>
<div class="abs" style="left:884.6px;top:491px;width:1px;height:35px;background:#e3e6e8"></div>
<span class="abs" style="left:888.1px;top:503px;font-size:14px;color:#111">06:30</span>
<div class="abs" style="left:951.0px;top:491px;width:1px;height:35px;background:#e3e6e8"></div>
<span class="abs" style="left:954.5px;top:503px;font-size:14px;color:#111">06:45</span>
<div class="abs" style="left:1017.4px;top:491px;width:1px;height:35px;background:#e3e6e8"></div>
<span class="abs" style="left:1020.9px;top:503px;font-size:14px;color:#111">07:00</span>
<div class="abs" style="left:1083.8px;top:491px;width:1px;height:35px;background:#e3e6e8"></div>
<span class="abs" style="left:1087.3px;top:503px;font-size:14px;color:#111">07:15</span>
<div class="abs" style="left:1150.2px;top:491px;width:1px;height:35px;background:#e3e6e8"></div>
<span class="abs" style="left:1153.7px;top:503px;font-size:14px;color:#111">07:30</span>
<div class="abs" style="left:1216.6px;top:491px;width:1px;height:35px;background:#e3e6e8"></div>
<span class="abs" style="left:1220.1px;top:503px;font-size:14px;color:#111">07:45</span>
<div class="abs" style="left:1283.0px;top:491px;width:1px;height:35px;background:#e3e6e8"></div>
<span class="abs" style="left:1286.5px;top:503px;font-size:14px;color:#111">08:00</span>
<div class="abs" style="left:1349.4px;top:491px;width:1px;height:35px;background:#e3e6e8"></div>
<span class="abs" style="left:1352.9px;top:503px;font-size:14px;color:#111">08:15</span>
<div class="abs" style="left:1415.8px;top:491px;width:1px;height:35px;background:#e3e6e8"></div>
<span class="abs" style="left:1419.3px;top:503px;font-size:14px;color:#111">08:30</span>
<div class="abs" style="left:1482.2px;top:491px;width:1px;height:35px;background:#e3e6e8"></div>
<span class="abs" style="left:1485.7px;top:503px;font-size:14px;color:#111">08:45</span>
<div class="abs" style="left:1548.6px;top:491px;width:1px;height:35px;background:#e3e6e8"></div>
<span class="abs" style="left:1552.1px;top:503px;font-size:14px;color:#111">09:00</span>
<div class="abs" style="left:364px;top:526px;width:256px;height:99px;background:#f2f2f2"></div>
<div class="abs" style="left:364px;top:763px;width:256px;height:16px;background:#f2f2f2"></div>
<span class="abs" style="left:374px;top:549px;font-size:14px;color:#111">Alvin Rube</span>
<span class="abs" style="left:591.5px;top:549px;font-size:14px;font-weight:bold;color:#111">96</span>
<span class="abs" style="left:374px;top:687px;font-size:14px;color:#111">Darryl Sawyer</span>
<span class="abs" style="left:591.5px;top:687px;font-size:14px;font-weight:bold;color:#111">90</span>
<div class="abs" style="left:620px;top:526px;width:946px;height:253px;background:#ebebeb"></div>
<div class="abs" style="left:620px;top:640px;width:946px;height:1.5px;background:#d9777c"></div>
<div class="abs" style="left:620px;top:777px;width:946px;height:2px;background:#d9777c"></div>
<div class="abs" style="left:620px;top:588px;width:946px;height:2px;background:#6e6e6e"></div>
<div class="abs" style="left:620px;top:725.5px;width:946px;height:2px;background:#6e6e6e"></div>
<div class="abs" style="left:620.0px;top:551.0px;width:103.0px;height:2.0px;background:#48a8f2"></div>
<div class="abs" style="left:724.0px;top:547.0px;width:23.0px;height:6.0px;background:#48a8f2"></div>
<div class="abs" style="left:749.0px;top:540.0px;width:81.0px;height:13.0px;background:#48a8f2"></div>
<div class="abs" style="left:832.0px;top:534.0px;width:70.0px;height:19.0px;background:#48a8f2"></div>
<div class="abs" style="left:904.0px;top:526.0px;width:35.0px;height:27.0px;background:#48a8f2"></div>
<div class="abs" style="left:941.0px;top:526.0px;width:52.0px;height:27.0px;background:#48a8f2"></div>
<div class="abs" style="left:995.0px;top:526.0px;width:34.0px;height:27.0px;background:#48a8f2"></div>
<div class="abs" style="left:1031.0px;top:526.0px;width:217.0px;height:27.0px;background:#48a8f2"></div>
<div class="abs" style="left:1421.0px;top:547.0px;width:145.0px;height:6.0px;background:#48a8f2"></div>
<div class="abs" style="left:1250.0px;top:551.0px;width:169.0px;height:2.0px;background:#48a8f2"></div>
<div class="abs" style="left:620.0px;top:688.0px;width:76.0px;height:2.0px;background:#48a8f2"></div>
<div class="abs" style="left:697.5px;top:687.8px;width:37.5px;height:2.2px;background:#48a8f2"></div>
<div class="abs" style="left:736.3px;top:684.6px;width:42.2px;height:5.4px;background:#48a8f2"></div>
<div class="abs" style="left:780.6px;top:680.8px;width:40.0px;height:9.2px;background:#48a8f2"></div>
<div class="abs" style="left:822.2px;top:677.2px;width:33.4px;height:12.8px;background:#48a8f2"></div>
<div class="abs" style="left:857.0px;top:673.7px;width:33.7px;height:16.3px;background:#48a8f2"></div>
<div class="abs" style="left:892.0px;top:671.2px;width:27.6px;height:18.8px;background:#48a8f2"></div>
<div class="abs" style="left:921.5px;top:668.0px;width:54.8px;height:22.0px;background:#48a8f2"></div>
<div class="abs" style="left:978.3px;top:664.5px;width:91.6px;height:25.5px;background:#48a8f2"></div>
<div class="abs" style="left:1071.5px;top:661.3px;width:37.8px;height:28.7px;background:#48a8f2"></div>
<div class="abs" style="left:1111.0px;top:657.3px;width:24.4px;height:32.7px;background:#48a8f2"></div>
<div class="abs" style="left:1137.0px;top:654.7px;width:28.6px;height:35.3px;background:#48a8f2"></div>
<div class="abs" style="left:1167.3px;top:651.7px;width:27.1px;height:38.3px;background:#48a8f2"></div>
<div class="abs" style="left:1196.0px;top:648.5px;width:39.3px;height:41.5px;background:#48a8f2"></div>
<div class="abs" style="left:1237.0px;top:644.5px;width:22.6px;height:45.5px;background:#48a8f2"></div>
<div class="abs" style="left:1261.6px;top:641.0px;width:157.8px;height:49.0px;background:#48a8f2"></div>
<div class="abs" style="left:1421.0px;top:688.0px;width:102.5px;height:2.0px;background:#48a8f2"></div>
<div class="abs" style="left:1525.0px;top:687.7px;width:32.0px;height:2.3px;background:#48a8f2"></div>
<div class="abs" style="left:1559.0px;top:683.7px;width:7.0px;height:6.3px;background:#48a8f2"></div>
<div class="abs" style="left:620px;top:526px;width:946px;height:6px;background:linear-gradient(rgba(0,0,0,.12),rgba(0,0,0,0))"></div>
<div class="abs" style="left:364px;top:526px;width:256px;height:4px;background:linear-gradient(rgba(0,0,0,.1),rgba(0,0,0,0))"></div>
<div class="abs" style="left:620px;top:455px;width:6px;height:324px;background:linear-gradient(90deg,rgba(0,0,0,.13),rgba(0,0,0,0))"></div>
<div class="abs" style="left:619px;top:455px;width:1px;height:324px;background:#9a9a9a"></div>
<div class="abs st sb" style="left:702.0px;top:562px;width:21.6px;height:53.5px"><span class="n">1</span><span class="l">M</span></div>
<div class="abs st sb" style="left:726.7px;top:562px;width:21.1px;height:53.5px"><span class="n">2</span><span class="l">Sa</span></div>
<div class="abs st sb" style="left:809.0px;top:562px;width:22.0px;height:53.5px"><span class="n">3</span><span class="l">Ki</span></div>
<div class="abs st sb" style="left:881.0px;top:562px;width:21.7px;height:53.5px"><span class="n">4</span><span class="l">Ev</span></div>
<div class="abs st sb" style="left:918.6px;top:562px;width:21.4px;height:53.5px"><span class="n">5</span><span class="l">Ro</span></div>
<div class="abs st sb" style="left:972.0px;top:562px;width:21.7px;height:53.5px"><span class="n">6</span><span class="l">Bo</span></div>
<div class="abs st sb" style="left:1008.4px;top:562px;width:21.4px;height:53.5px"><span class="n">7</span><span class="l">Re</span></div>
<div class="abs st sb" style="left:1398.5px;top:562px;width:21.5px;height:53.5px"><span class="n">9</span><span class="l">Ge</span></div>
<div class="abs st so" style="left:1161.0px;top:562px;width:88.4px;height:53.5px"><span class="n">8 - &#9733;</span><span class="l">Foothills Land</span></div>
<div class="abs st sy" style="left:675.7px;top:700px;width:20.7px;height:52px"><span class="n">1</span><span class="l">Bo</span></div>
<div class="abs st sy" style="left:714.0px;top:700px;width:20.7px;height:52px"><span class="n">2</span><span class="l">Da</span></div>
<div class="abs st sy" style="left:758.4px;top:700px;width:20.4px;height:52px"><span class="n">3</span><span class="l">Fi</span></div>
<div class="abs st sy" style="left:800.2px;top:700px;width:20.8px;height:52px"><span class="n">4</span><span class="l">Ta</span></div>
<div class="abs st sy" style="left:835.3px;top:700px;width:20.4px;height:52px"><span class="n">5</span><span class="l">Da</span></div>
<div class="abs st sy" style="left:870.0px;top:700px;width:20.9px;height:52px"><span class="n">6</span><span class="l">Lit</span></div>
<div class="abs st sy" style="left:899.2px;top:700px;width:21.0px;height:52px"><span class="n">7</span><span class="l">Ar</span></div>
<div class="abs st sy" style="left:956.3px;top:700px;width:21.1px;height:52px"><span class="n">8</span><span class="l">Le</span></div>
<div class="abs st sy" style="left:1049.6px;top:700px;width:20.7px;height:52px"><span class="n">9</span><span class="l">Fi</span></div>
<div class="abs st sy" style="left:1088.9px;top:700px;width:21.4px;height:52px"><span class="n">10</span><span class="l">Sr</span></div>
<div class="abs st sy" style="left:1115.0px;top:700px;width:20.7px;height:52px"><span class="n">11</span><span class="l">Do</span></div>
<div class="abs st sy" style="left:1145.2px;top:700px;width:20.8px;height:52px"><span class="n">12</span><span class="l">Mc</span></div>
<div class="abs st sy" style="left:1174.2px;top:700px;width:20.8px;height:52px"><span class="n">13</span><span class="l">Ch</span></div>
<div class="abs st sy" style="left:1214.7px;top:700px;width:21.5px;height:52px"><span class="n">14</span><span class="l">Bi</span></div>
<div class="abs st sy" style="left:1239.5px;top:700px;width:21.4px;height:52px"><span class="n">15</span><span class="l">Mc</span></div>
<div class="abs st sy" style="left:1502.4px;top:700px;width:21.4px;height:52px"><span class="n">17</span><span class="l">Bo</span></div>
<div class="abs st sy" style="left:1537.6px;top:700px;width:20.8px;height:52px"><span class="n">18</span><span class="l">Sr</span></div>
<div class="abs st so" style="left:1332.4px;top:700px;width:88.3px;height:52px"><span class="n">16 - &#9733;</span><span class="l">Denver Region</span></div>
</div>
</body></html>
